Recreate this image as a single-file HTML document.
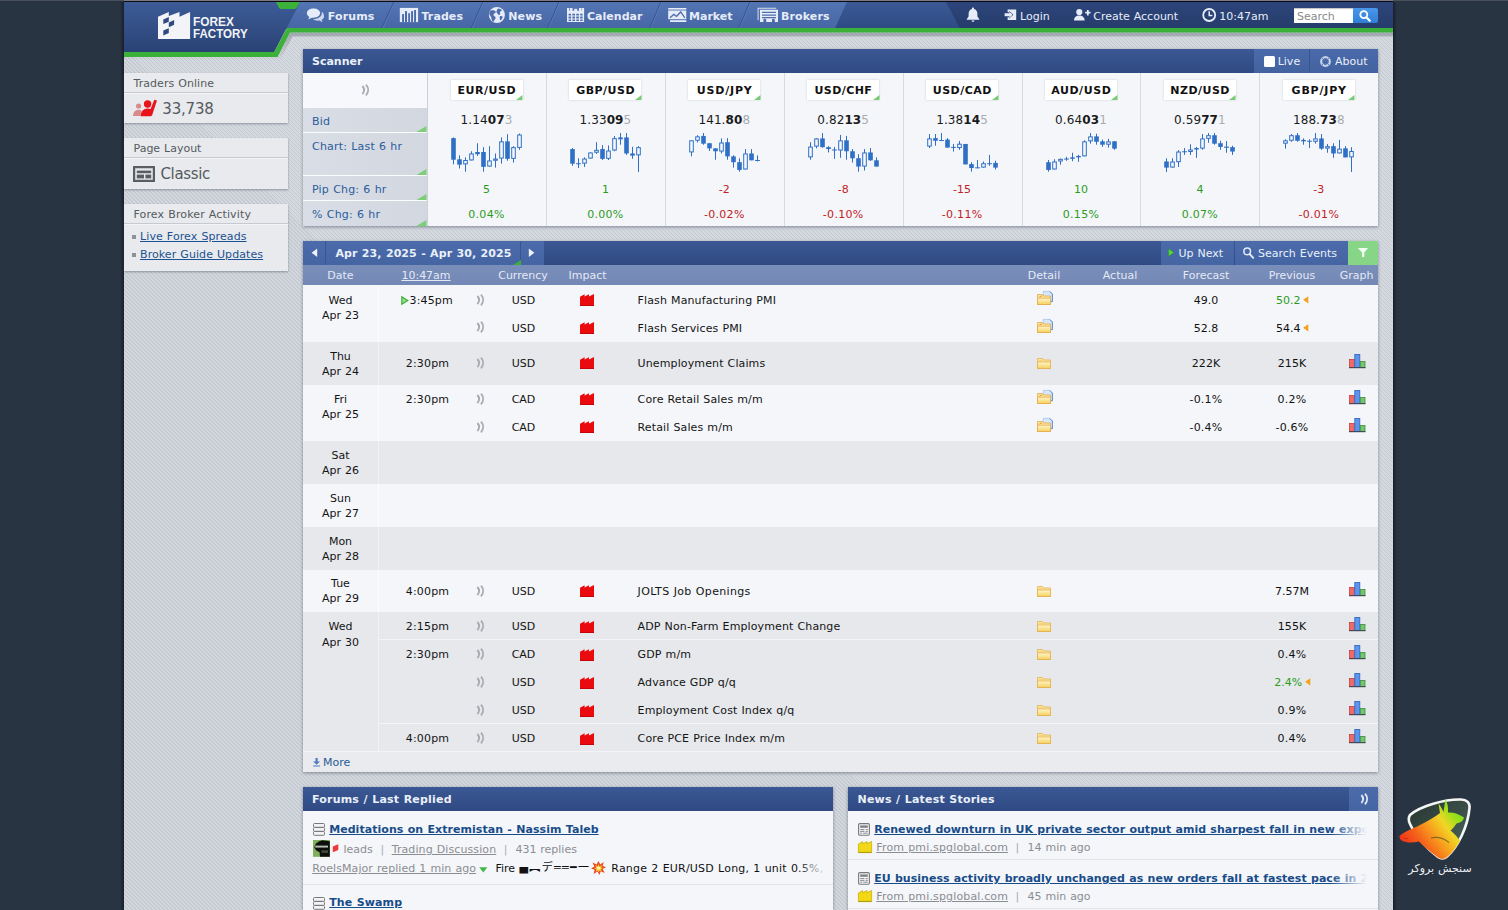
<!DOCTYPE html>
<html lang="en"><head><meta charset="utf-8"><title>Forex Factory</title>
<style>
html,body{margin:0;padding:0}
body{width:1508px;height:910px;overflow:hidden;position:relative;background:#293443;font-family:"DejaVu Sans","Liberation Sans",sans-serif;font-size:11px;}
.t{position:absolute;white-space:nowrap;font-family:"DejaVu Sans","Liberation Sans",sans-serif;word-spacing:0.4px}
.b{position:absolute}
svg{position:absolute;overflow:visible}
a{color:inherit}
.u{text-decoration:underline}
</style></head><body>
<div class="b" style="left:0px;top:0px;width:1508px;height:1px;background:#4a4f5c;"></div><div class="b" style="left:124px;top:0px;width:1269px;height:0.7px;background:#7d7886;"></div><div class="b" style="left:124px;top:0.7px;width:1269px;height:1.3px;background:#0b0b14;"></div><div class="b" style="left:120px;top:2px;width:4px;height:908px;background:linear-gradient(90deg,rgba(0,0,0,0),rgba(10,14,22,.55));"></div><div class="b" style="left:1393px;top:2px;width:4px;height:908px;background:linear-gradient(90deg,rgba(10,14,22,.55),rgba(0,0,0,0));"></div><div class="b" style="left:124px;top:2px;width:1269px;height:908px;background:repeating-linear-gradient(45deg,#c5cad2 0,#c5cad2 0.8px,#d4d8df 0.8px,#d4d8df 2.828px);"></div><svg style="left:124px;top:2px" width="1269" height="64" viewBox="124 2 1269 64">
<defs>
<linearGradient id="gLogo" x1="0" y1="0" x2="0" y2="1"><stop offset="0" stop-color="#3c5b97"/><stop offset="1" stop-color="#2a4375"/></linearGradient>
<linearGradient id="gNavL" x1="0" y1="0" x2="0" y2="1"><stop offset="0" stop-color="#5475b3"/><stop offset="1" stop-color="#4666a6"/></linearGradient>
<linearGradient id="gNavM" x1="0" y1="0" x2="0" y2="1"><stop offset="0" stop-color="#3a5995"/><stop offset="1" stop-color="#2f4b84"/></linearGradient>
<linearGradient id="gNavD" x1="0" y1="0" x2="0" y2="1"><stop offset="0" stop-color="#2d457b"/><stop offset="1" stop-color="#263c6b"/></linearGradient>
<linearGradient id="gSh" x1="0" y1="0" x2="0" y2="1"><stop offset="0" stop-color="rgba(40,50,60,.28)"/><stop offset="1" stop-color="rgba(40,50,60,0)"/></linearGradient>
</defs>
<!-- shadow under header -->
<polygon points="124,57 277.5,57 290,32.5 1393,32.5 1393,36.5 292.5,36.5 280,61 124,61" fill="url(#gSh)"/>
<!-- nav dark base -->
<rect x="280" y="2" width="1113" height="26.5" fill="url(#gNavD)"/>
<polygon points="835,28.5 847,2 946,2 960,28.5" fill="url(#gNavM)"/>
<polygon points="286,28.5 300,2 847,2 835,28.5" fill="url(#gNavL)"/>
<!-- nav separators -->
<g stroke="#34528f" stroke-width="1" fill="none">
<line x1="393.8" y1="2" x2="381.8" y2="28"/><line x1="482.8" y1="2" x2="471.3" y2="28"/><line x1="558.8" y1="2" x2="547.8" y2="28"/><line x1="660.8" y1="2" x2="649.8" y2="28"/><line x1="749.8" y1="2" x2="738.8" y2="28"/>
</g>
<g stroke="#5f7fbb" stroke-width="1" fill="none" opacity=".7">
<line x1="394.8" y1="2" x2="382.8" y2="28"/><line x1="483.8" y1="2" x2="472.3" y2="28"/><line x1="559.8" y1="2" x2="548.8" y2="28"/><line x1="661.8" y1="2" x2="650.8" y2="28"/><line x1="750.8" y1="2" x2="739.8" y2="28"/>
</g>
<!-- logo dark block -->
<polygon points="124,2 300,2 274.3,52 124,52" fill="url(#gLogo)"/>
<!-- green tab -->
<polygon points="276,2 300,2 296.5,8 295,9 280.5,9 279,8" fill="#3bb13a"/>
<!-- green stripe -->
<polygon points="124,52 274.3,52 287,28 1393,28 1393,32.5 290,32.5 277.5,57 124,57" fill="#3bb13a"/>
<!-- logo mark -->
<path fill="#f2f4f8" d="M158,38.9 L158,16.700 L168.800,11.900 L168.800,16 L179.500,11.900 L179.500,16.700 L190.100,11.900 L190.100,38.900 Z"/>
<g fill="#2e4980">
<polygon points="163.300,19.600 168.800,17 168.800,21.800 163.300,24.100"/>
<polygon points="168.800,22.500 174.100,20 174.100,24.800 168.800,27.200"/>
<polygon points="163.300,30.500 168.800,28.300 168.800,33.100 163.300,35.600"/>
</g>
<text x="193" y="26.200" font-family="'Liberation Sans',sans-serif" font-weight="bold" font-size="12.300" fill="#f2f4f8" textLength="40.900" lengthAdjust="spacingAndGlyphs">FOREX</text>
<text x="193" y="38.200" font-family="'Liberation Sans',sans-serif" font-weight="bold" font-size="12.300" fill="#f2f4f8" textLength="54.700" lengthAdjust="spacingAndGlyphs">FACTORY</text>
</svg><div class="t" style="top:9.5px;font-size:11px;line-height:13px;color:#e6ecf8;font-weight:bold;letter-spacing:0.12px;left:327.8px;">Forums</div><div class="t" style="top:9.5px;font-size:11px;line-height:13px;color:#e6ecf8;font-weight:bold;letter-spacing:0.08px;left:421.5px;">Trades</div><div class="t" style="top:9.5px;font-size:11px;line-height:13px;color:#e6ecf8;font-weight:bold;letter-spacing:0.16px;left:508.2px;">News</div><div class="t" style="top:9.5px;font-size:11px;line-height:13px;color:#e6ecf8;font-weight:bold;letter-spacing:0.03px;left:587px;">Calendar</div><div class="t" style="top:9.5px;font-size:11px;line-height:13px;color:#e6ecf8;font-weight:bold;letter-spacing:0.01px;left:689px;">Market</div><div class="t" style="top:9.5px;font-size:11px;line-height:13px;color:#e6ecf8;font-weight:bold;letter-spacing:0.11px;left:781px;">Brokers</div><div class="t" style="top:9.5px;font-size:11px;line-height:13px;color:#e6ecf8;left:1020px;">Login</div><div class="t" style="top:9.5px;font-size:11px;line-height:13px;color:#e6ecf8;left:1093.3px;">Create Account</div><div class="t" style="top:9.5px;font-size:11px;line-height:13px;color:#e6ecf8;left:1219.3px;">10:47am</div><svg style="left:0;top:0" width="1508" height="34" viewBox="0 0 1508 34">
<g fill="#e6ecf8">
<!-- forums bubbles -->
<path d="M313.5,8.5c-3.7,0-6.6,2.1-6.6,4.7c0,1.5,1,2.9,2.5,3.7l-1.2,2.6l3.6-1.8c.5,.1,1.1,.1,1.7,.1c3.7,0,6.6-2.1,6.6-4.7S317.200,8.500,313.500,8.500z"/>
<path d="M321.5,11.800c.2,.5,.3,1,.3,1.500c0,3.200-3.500,5.800-7.900,5.800c-.3,0-.5,0-.8,0c1.100,1,2.900,1.600,4.800,1.600c.5,0,1-.1,1.500-.1l3.200,1.600l-1-2.400c1.500-.8,2.400-2,2.400-3.400C324,13.800,323,12.500,321.500,11.800z" opacity=".85"/>
<!-- trades -->
<rect x="399.800" y="7.900" width="18.300" height="14.200"/>
<g fill="#4b6bab"><rect x="402.100" y="14.100" width="1.900" height="8"/><rect x="405" y="11.100" width="2" height="11"/><rect x="408.200" y="13.200" width="1.800" height="8.900"/><rect x="411.100" y="11.100" width="1.900" height="11"/><rect x="414.100" y="10" width="1.900" height="12.100"/></g>
</g>
<!-- news globe -->
<circle cx="496.900" cy="15" r="8" fill="#e6ecf8"/>
<g fill="#4d6dac">
<path d="M491,10.500c1.500-.5,3.500-.3,4.500,.8c.8,1-.5,2-1.500,2.500c-1,.5-.5,2,.5,2.500c1.200,.6,1.500,2,.5,3c-.8,.8-1,2-1.500,2.500c-1.500-.5-2-2.500-2.200-4c-.1-1.500-1.800-2.200-2-3.800C489.200,12.500,490,11,491,10.500z"/>
<path d="M498,8.500c1.500,.2,3,.8,4,1.800c-.5,.8-1.500,.8-2,1.600c-.4,.8,.5,1.800,.1,2.600c-.5,.8-1.800,.5-2.200-.4c-.4-1-1.500-1-1.500-2C496.400,11,497.200,9.500,498,8.500z"/>
<path d="M500,16c1-.3,2.200,0,2.800,.8c-.3,1.500-1.200,2.800-2.400,3.700C499.800,19.200,499.300,17.200,500,16z"/>
</g>
<g fill="#e6ecf8">
<!-- calendar -->
<rect x="567" y="8" width="2.200" height="3.500"/><rect x="569.900" y="8" width="2.600" height="3.500"/><rect x="579" y="8" width="2.600" height="3.500"/><rect x="582" y="8" width="2.100" height="3.500"/><rect x="574.200" y="8.800" width="3" height="2.600"/>
<path d="M567,10.800h17.100v11.200h-17.100z M568.600,13.700v1.900h2.500v-1.900z M572.400,13.700v1.900h2.600v-1.900z M576.300,13.700v1.900h2.600v-1.900z M580.200,13.700v1.900h2.400v-1.900z M568.600,16.600v1.900h2.500v-1.900z M572.400,16.600v1.900h2.600v-1.900z M576.300,16.600v1.900h2.600v-1.900z M580.200,16.600v1.900h2.400v-1.900z M568.600,19.400v1.500h2.500v-1.500z M572.400,19.400v1.500h2.600v-1.500z M576.300,19.400v1.500h2.600v-1.500z M580.200,19.400v1.500h2.400v-1.500z" fill-rule="evenodd"/>
<!-- market -->
<rect x="668.200" y="8" width="18.100" height="1.600"/>
<rect x="670" y="20.200" width="16.300" height="1.800"/>
<path d="M668.200,10.400v8.800h18.100v-8.800z M669.600,17.200l4.200-3.600l2.600,1.800l4.400-4.600l4.600,6.600l-1,.8l-3.700-5.300l-4.100,4.300l-2.700-1.900l-3.500,3z" fill-rule="evenodd"/>
<!-- brokers -->
<path d="M757.600,7.800h18.600v1h-17.600v11.400h-1z" opacity=".9"/>
<path d="M760,9.800h18v12.200h-3.200v-2.300c0-1.200-2.800-1.200-2.800,0v2.300h-5.800v-2.300c0-1.200-2.800-1.200-2.800,0v2.300h-3.400z M762,11.800v1.300h14v-1.300z M762,14.400v1.300h14v-1.300z M762,17v1.300h14v-1.300z" fill-rule="evenodd"/>
<!-- bell -->
<path d="M973,7.600c-.6,0-1,.4-1,1v.5c-2.100,.5-3.400,2.300-3.400,4.700v2.800l-1.800,2.400v.8h12.400v-.8l-1.800-2.400v-2.800c0-2.400-1.300-4.200-3.400-4.700v-.5C974,8,973.600,7.600,973,7.600z M971.500,20.400c0,.8,.7,1.400,1.500,1.400s1.500-.6,1.500-1.400z"/>
<!-- login -->
<path d="M1007.600,9.500h8.600v10.600h-8.600v-2.800h1.600v1.200l4.200-3.700l-4.200-3.700v1.200h-1.600z"/>
<path d="M1004.600,13.300h4.800v-1.600l3.200,3.100l-3.200,3.100v-1.600h-4.800z"/>
<!-- create account -->
<circle cx="1079.300" cy="12" r="3.100"/>
<path d="M1074,20.500c0-3.200,2.300-5,5.300-5s5.300,1.800,5.300,5z"/>
<path d="M1085.200,11.800h1.800v-1.900h1.700v1.900h1.800v1.700h-1.800v1.900h-1.700v-1.900h-1.800z"/>
</g>
<!-- clock -->
<circle cx="1209.200" cy="15" r="6" fill="none" stroke="#e6ecf8" stroke-width="1.800"/>
<path d="M1209.200,11.200v4.200h3.200" fill="none" stroke="#e6ecf8" stroke-width="1.500"/>
</svg><div class="b" style="left:1294px;top:8px;width:59px;height:15px;background:#fff;box-shadow:inset 0 1px 1px rgba(0,0,0,.25)"></div><div class="t" style="top:9.5px;font-size:11px;line-height:13px;color:#8a8a8a;left:1297px;">Search</div><div class="b" style="left:1353px;top:8px;width:25px;height:15px;background:linear-gradient(#4a97ea,#2f7fd6);border-radius:0 2px 2px 0"></div><svg style="left:1358px;top:9px" width="14" height="14" viewBox="0 0 14 14"><circle cx="5.800" cy="5.600" r="3.500" fill="none" stroke="#fff" stroke-width="1.800"/><path d="M8.300,8.200l3.400,3.400" stroke="#fff" stroke-width="2.200" stroke-linecap="round"/></svg><div class="b" style="left:124px;top:73px;width:164px;height:50px;background:#e8eaed;box-shadow:0 1px 2px rgba(60,70,85,.45)"></div><div class="b" style="left:124px;top:92px;width:164px;height:1px;background:#c6cad0;"></div><div class="b" style="left:124px;top:93px;width:164px;height:1px;background:#f4f5f7;"></div><div class="t" style="top:77px;font-size:11px;line-height:13px;color:#555a60;letter-spacing:0.06px;left:133.5px;">Traders Online</div><div class="t" style="top:100px;font-size:15px;line-height:18px;color:#555a60;letter-spacing:-0.2px;left:162.3px;">33,738</div><svg style="left:132px;top:98px" width="28" height="20" viewBox="132 98 28 20">
<g fill="#d98a8a"><circle cx="138.600" cy="106" r="2.600"/><path d="M133,116c.3-4,2.300-6.200,5.600-6.200c1.300,0,2.400,.4,3.200,1.100l-1.800,5.100z"/></g>
<g fill="#e8141a"><circle cx="147.600" cy="104" r="3.700"/><path d="M140.500,116.200c.5-5,3-7.800,7-7.800c1.200,0,2.200,.2,3.100,.7l3.700-9.300l2.700,.6l-4.500,13.600c-.3,1.400-.9,2.200-2.300,2.200z"/></g>
</svg><div class="b" style="left:124px;top:138px;width:164px;height:51px;background:#e8eaed;box-shadow:0 1px 2px rgba(60,70,85,.45)"></div><div class="b" style="left:124px;top:157px;width:164px;height:1px;background:#c6cad0;"></div><div class="b" style="left:124px;top:158px;width:164px;height:1px;background:#f4f5f7;"></div><div class="t" style="top:142px;font-size:11px;line-height:13px;color:#555a60;left:133.5px;">Page Layout</div><div class="t" style="top:164.5px;font-size:15px;line-height:18px;color:#555a60;letter-spacing:-0.35px;left:160.5px;">Classic</div><svg style="left:133px;top:166px" width="22" height="16" viewBox="0 0 22 16">
<path fill="#5a5e64" fill-rule="evenodd" d="M0,0h22v16h-22z M2.200,2.200v11.600h17.600v-11.600z"/>
<rect x="3.800" y="4.600" width="14.400" height="2.600" fill="#5a5e64"/>
<rect x="3.800" y="8.600" width="7.200" height="3.800" fill="#5a5e64"/>
<rect x="12.400" y="8.600" width="5.800" height="3.800" fill="#5a5e64"/>
</svg><div class="b" style="left:124px;top:204px;width:164px;height:67px;background:#e8eaed;box-shadow:0 1px 2px rgba(60,70,85,.45)"></div><div class="b" style="left:124px;top:223px;width:164px;height:1px;background:#c6cad0;"></div><div class="b" style="left:124px;top:224px;width:164px;height:1px;background:#f4f5f7;"></div><div class="t" style="top:208px;font-size:11px;line-height:13px;color:#555a60;letter-spacing:0.13px;left:133.5px;">Forex Broker Activity</div><div class="t" style="top:230px;font-size:11px;line-height:13px;color:#1c5290;letter-spacing:0.1px;left:140px;text-decoration:underline;">Live Forex Spreads</div><div class="t" style="top:248px;font-size:11px;line-height:13px;color:#1c5290;letter-spacing:0.08px;left:140px;text-decoration:underline;">Broker Guide Updates</div><div class="b" style="left:131.5px;top:235px;width:4px;height:4px;background:#8d9299;"></div><div class="b" style="left:131.5px;top:253px;width:4px;height:4px;background:#8d9299;"></div><div class="b" style="left:303px;top:49px;width:1075px;height:177px;background:#f4f6fa;box-shadow:0 1px 3px rgba(50,60,80,.5)"></div><div class="b" style="left:303px;top:49px;width:1075px;height:23.5px;background:linear-gradient(#3b5894,#2f4a83);"></div><div class="t" style="top:55px;font-size:11px;line-height:13px;color:#eaf0fa;font-weight:bold;left:312px;">Scanner</div><div class="b" style="left:1254px;top:49px;width:124px;height:23.5px;background:linear-gradient(#4a6aaa,#4262a0);"></div><div class="b" style="left:1309px;top:49px;width:1px;height:23.5px;background:#37558f;"></div><div class="b" style="left:1264px;top:56px;width:11px;height:11px;background:#fff;border-radius:1.5px;"></div><div class="t" style="top:55px;font-size:11px;line-height:13px;color:#eaf0fa;left:1277.7px;">Live</div><svg style="left:1319px;top:55px" width="13" height="13" viewBox="0 0 13 13"><circle cx="6.500" cy="6.500" r="4.300" fill="none" stroke="#c5d2ea" stroke-width="2.300"/><circle cx="6.500" cy="6.500" r="2.600" fill="none" stroke="#5b78b3" stroke-width=".8"/><g stroke="#5b78b3" stroke-width=".9"><path d="M3,3l1.800,1.800M10,3l-1.800,1.800M3,10l1.800-1.800M10,10l-1.800-1.800"/></g></svg><div class="t" style="top:55px;font-size:11px;line-height:13px;color:#eaf0fa;left:1335px;">About</div><div class="b" style="left:303px;top:72.5px;width:124px;height:35.5px;background:#f7f8fb;"></div><div class="b" style="left:303px;top:108px;width:124px;height:24px;background:linear-gradient(90deg,#d9dde6,#d2d7e0);"></div><svg style="left:415.700px;top:125.8px" width="10.400" height="6.200" viewBox="0 0 10.400 6.200"><polygon points="10.400,0 10.400,6.200 0,6.200" fill="#7bcf77"/></svg><div class="b" style="left:303px;top:133.3px;width:124px;height:41.5px;background:linear-gradient(90deg,#d9dde6,#d2d7e0);"></div><svg style="left:415.700px;top:168.60000000000002px" width="10.400" height="6.200" viewBox="0 0 10.400 6.200"><polygon points="10.400,0 10.400,6.200 0,6.200" fill="#7bcf77"/></svg><div class="b" style="left:303px;top:176px;width:124px;height:23.900000000000006px;background:linear-gradient(90deg,#d9dde6,#d2d7e0);"></div><svg style="left:415.700px;top:193.70000000000002px" width="10.400" height="6.200" viewBox="0 0 10.400 6.200"><polygon points="10.400,0 10.400,6.200 0,6.200" fill="#7bcf77"/></svg><div class="b" style="left:303px;top:201px;width:124px;height:25px;background:linear-gradient(90deg,#d9dde6,#d2d7e0);"></div><svg style="left:415.700px;top:219.8px" width="10.400" height="6.200" viewBox="0 0 10.400 6.200"><polygon points="10.400,0 10.400,6.200 0,6.200" fill="#7bcf77"/></svg><div class="b" style="left:303px;top:132px;width:123.2px;height:1.2px;background:#fbfcfd;"></div><div class="b" style="left:303px;top:174.8px;width:123.2px;height:1.2px;background:#fbfcfd;"></div><div class="b" style="left:303px;top:199.9px;width:123.2px;height:1.2px;background:#fbfcfd;"></div><div class="b" style="left:427px;top:72.5px;width:1px;height:153.5px;background:#ccd0d8;"></div><div class="t" style="top:115px;font-size:11px;line-height:13px;color:#2b5d9c;letter-spacing:0.15px;left:312px;">Bid</div><div class="t" style="top:140px;font-size:11px;line-height:13px;color:#2b5d9c;letter-spacing:0.2px;left:312px;">Chart: Last 6 hr</div><div class="t" style="top:182.5px;font-size:11px;line-height:13px;color:#2b5d9c;letter-spacing:0.2px;left:312px;">Pip Chg: 6 hr</div><div class="t" style="top:208px;font-size:11px;line-height:13px;color:#2b5d9c;letter-spacing:0.2px;left:312px;">% Chg: 6 hr</div><svg style="left:360px;top:83px" width="10" height="14" viewBox="-5 -7 10 14"><g fill="none" stroke="#a9acb3" stroke-width="1.900" stroke-linecap="butt" transform="scale(1.0)"><path d="M-2.600,-4c2.100,2.400,2.100,5.600,0,8"/><path d="M1,-5.300c2.800,3.200,2.800,7.400,0,10.600"/></g></svg><div class="b" style="left:450.5px;top:80px;width:72px;height:20px;background:#fff;box-shadow:0 0 2px rgba(120,130,150,.35)"></div><svg style="left:516.0px;top:95px" width="6.500" height="5" viewBox="0 0 6.500 5"><polygon points="6.500,0 6.500,5 0,5" fill="#79cb74"/></svg><div class="t" style="top:84px;font-size:11px;line-height:13px;color:#111;font-weight:bold;letter-spacing:0.54px;left:436.77px;width:100px;text-align:center;">EUR/USD</div><div class="t" style="top:113px;font-size:12px;line-height:14px;color:#1a1a1a;letter-spacing:0.1px;left:431.5px;width:110px;text-align:center;">1.14<b>07</b><span style="color:#a9acb0">3</span></div><div class="t" style="top:182.6px;font-size:11px;line-height:13px;color:#2c9c1c;left:436.5px;width:100px;text-align:center;">5</div><div class="t" style="top:208px;font-size:11px;line-height:13px;color:#2c9c1c;letter-spacing:0.3px;left:436.5px;width:100px;text-align:center;">0.04%</div><svg style="left:427.0px;top:125px" width="119" height="55" viewBox="0 0 119 55"><line x1="26.50" y1="12.40" x2="26.50" y2="39.39" stroke="#2f6fc6" stroke-width="1"/><rect x="24.20" y="13.13" width="4.600" height="21.59" fill="#2f6fc6"/><line x1="32.50" y1="30.34" x2="32.50" y2="43.47" stroke="#2f6fc6" stroke-width="1"/><rect x="30.20" y="34.28" width="4.600" height="5.40" fill="#2f6fc6"/><line x1="38.50" y1="32.39" x2="38.50" y2="46.68" stroke="#2f6fc6" stroke-width="1"/><rect x="36.70" y="35.51" width="3.600" height="3.38" fill="#f6f8fb" stroke="#2f6fc6" stroke-width="1"/><line x1="44.50" y1="26.26" x2="44.50" y2="35.45" stroke="#2f6fc6" stroke-width="1"/><rect x="42.70" y="28.95" width="3.600" height="6.00" fill="#f6f8fb" stroke="#2f6fc6" stroke-width="1"/><line x1="50.50" y1="18.23" x2="50.50" y2="30.93" stroke="#2f6fc6" stroke-width="1"/><rect x="48.20" y="26.99" width="4.600" height="2.19" fill="#2f6fc6"/><line x1="56.50" y1="22.17" x2="56.50" y2="46.68" stroke="#2f6fc6" stroke-width="1"/><rect x="54.20" y="26.99" width="4.600" height="14.88" fill="#2f6fc6"/><line x1="62.50" y1="21.15" x2="62.50" y2="41.58" stroke="#2f6fc6" stroke-width="1"/><rect x="60.70" y="35.95" width="3.600" height="5.13" fill="#f6f8fb" stroke="#2f6fc6" stroke-width="1"/><line x1="68.50" y1="28.45" x2="68.50" y2="42.60" stroke="#2f6fc6" stroke-width="1"/><rect x="66.70" y="34.05" width="3.600" height="1.19" fill="#f6f8fb" stroke="#2f6fc6" stroke-width="1"/><line x1="74.50" y1="12.40" x2="74.50" y2="38.66" stroke="#2f6fc6" stroke-width="1"/><rect x="72.70" y="16.84" width="3.600" height="16.21" fill="#f6f8fb" stroke="#2f6fc6" stroke-width="1"/><line x1="80.50" y1="9.19" x2="80.50" y2="35.74" stroke="#2f6fc6" stroke-width="1"/><rect x="78.20" y="16.34" width="4.600" height="17.51" fill="#2f6fc6"/><line x1="86.50" y1="21.15" x2="86.50" y2="37.64" stroke="#2f6fc6" stroke-width="1"/><rect x="84.70" y="22.67" width="3.600" height="10.67" fill="#f6f8fb" stroke="#2f6fc6" stroke-width="1"/><line x1="92.50" y1="8.46" x2="92.50" y2="24.80" stroke="#2f6fc6" stroke-width="1"/><rect x="90.70" y="9.98" width="3.600" height="12.42" fill="#f6f8fb" stroke="#2f6fc6" stroke-width="1"/></svg><div class="b" style="left:545.5px;top:72.5px;width:1px;height:153.5px;background:#d6dae1;"></div><div class="b" style="left:569.4px;top:80px;width:72px;height:20px;background:#fff;box-shadow:0 0 2px rgba(120,130,150,.35)"></div><svg style="left:634.9px;top:95px" width="6.500" height="5" viewBox="0 0 6.500 5"><polygon points="6.500,0 6.500,5 0,5" fill="#79cb74"/></svg><div class="t" style="top:84px;font-size:11px;line-height:13px;color:#111;font-weight:bold;letter-spacing:0.47px;left:555.635px;width:100px;text-align:center;">GBP/USD</div><div class="t" style="top:113px;font-size:12px;line-height:14px;color:#1a1a1a;letter-spacing:0.1px;left:550.4px;width:110px;text-align:center;">1.33<b>09</b><span style="color:#a9acb0">5</span></div><div class="t" style="top:182.6px;font-size:11px;line-height:13px;color:#2c9c1c;left:555.4px;width:100px;text-align:center;">1</div><div class="t" style="top:208px;font-size:11px;line-height:13px;color:#2c9c1c;letter-spacing:0.3px;left:555.4px;width:100px;text-align:center;">0.00%</div><svg style="left:545.9px;top:125px" width="119" height="55" viewBox="0 0 119 55"><line x1="26.50" y1="23.05" x2="26.50" y2="40.85" stroke="#2f6fc6" stroke-width="1"/><rect x="24.20" y="24.07" width="4.600" height="14.59" fill="#2f6fc6"/><line x1="32.50" y1="33.26" x2="32.50" y2="43.03" stroke="#2f6fc6" stroke-width="1"/><rect x="30.10" y="38.22" width="4.800" height="1.00" fill="#2f6fc6"/><line x1="38.50" y1="32.39" x2="38.50" y2="42.01" stroke="#2f6fc6" stroke-width="1"/><rect x="36.70" y="34.05" width="3.600" height="4.11" fill="#f6f8fb" stroke="#2f6fc6" stroke-width="1"/><line x1="44.50" y1="27.43" x2="44.50" y2="33.55" stroke="#2f6fc6" stroke-width="1"/><rect x="42.70" y="27.93" width="3.600" height="5.13" fill="#f6f8fb" stroke="#2f6fc6" stroke-width="1"/><line x1="50.50" y1="17.21" x2="50.50" y2="28.88" stroke="#2f6fc6" stroke-width="1"/><rect x="48.70" y="25.30" width="3.600" height="1.92" fill="#f6f8fb" stroke="#2f6fc6" stroke-width="1"/><line x1="56.50" y1="20.13" x2="56.50" y2="35.01" stroke="#2f6fc6" stroke-width="1"/><rect x="54.20" y="24.07" width="4.600" height="9.77" fill="#2f6fc6"/><line x1="62.50" y1="20.42" x2="62.50" y2="35.01" stroke="#2f6fc6" stroke-width="1"/><rect x="60.70" y="26.03" width="3.600" height="7.32" fill="#f6f8fb" stroke="#2f6fc6" stroke-width="1"/><line x1="68.50" y1="10.94" x2="68.50" y2="26.26" stroke="#2f6fc6" stroke-width="1"/><rect x="66.70" y="13.63" width="3.600" height="11.40" fill="#f6f8fb" stroke="#2f6fc6" stroke-width="1"/><line x1="74.50" y1="8.02" x2="74.50" y2="19.69" stroke="#2f6fc6" stroke-width="1"/><rect x="72.20" y="12.40" width="4.600" height="1.90" fill="#2f6fc6"/><line x1="80.50" y1="8.02" x2="80.50" y2="29.91" stroke="#2f6fc6" stroke-width="1"/><rect x="78.20" y="12.40" width="4.600" height="16.05" fill="#2f6fc6"/><line x1="86.50" y1="21.88" x2="86.50" y2="33.84" stroke="#2f6fc6" stroke-width="1"/><rect x="84.20" y="28.45" width="4.600" height="2.19" fill="#2f6fc6"/><line x1="92.50" y1="21.15" x2="92.50" y2="46.97" stroke="#2f6fc6" stroke-width="1"/><rect x="90.70" y="22.67" width="3.600" height="7.17" fill="#f6f8fb" stroke="#2f6fc6" stroke-width="1"/></svg><div class="b" style="left:664.5px;top:72.5px;width:1px;height:153.5px;background:#d6dae1;"></div><div class="b" style="left:688.3px;top:80px;width:72px;height:20px;background:#fff;box-shadow:0 0 2px rgba(120,130,150,.35)"></div><svg style="left:753.8px;top:95px" width="6.500" height="5" viewBox="0 0 6.500 5"><polygon points="6.500,0 6.500,5 0,5" fill="#79cb74"/></svg><div class="t" style="top:84px;font-size:11px;line-height:13px;color:#111;font-weight:bold;letter-spacing:0.8px;left:674.6999999999999px;width:100px;text-align:center;">USD/JPY</div><div class="t" style="top:113px;font-size:12px;line-height:14px;color:#1a1a1a;letter-spacing:0.1px;left:669.3px;width:110px;text-align:center;">141.<b>80</b><span style="color:#a9acb0">8</span></div><div class="t" style="top:182.6px;font-size:11px;line-height:13px;color:#c2211f;left:674.3px;width:100px;text-align:center;">-2</div><div class="t" style="top:208px;font-size:11px;line-height:13px;color:#c2211f;letter-spacing:0.3px;left:674.3px;width:100px;text-align:center;">-0.02%</div><svg style="left:664.8px;top:125px" width="119" height="55" viewBox="0 0 119 55"><line x1="26.50" y1="15.32" x2="26.50" y2="31.36" stroke="#2f6fc6" stroke-width="1"/><rect x="24.70" y="15.82" width="3.600" height="11.11" fill="#f6f8fb" stroke="#2f6fc6" stroke-width="1"/><line x1="32.50" y1="10.21" x2="32.50" y2="17.51" stroke="#2f6fc6" stroke-width="1"/><rect x="30.70" y="11.88" width="3.600" height="3.38" fill="#f6f8fb" stroke="#2f6fc6" stroke-width="1"/><line x1="38.50" y1="8.02" x2="38.50" y2="19.69" stroke="#2f6fc6" stroke-width="1"/><rect x="36.20" y="10.94" width="4.600" height="7.73" fill="#2f6fc6"/><line x1="44.50" y1="18.23" x2="44.50" y2="25.97" stroke="#2f6fc6" stroke-width="1"/><rect x="42.20" y="18.23" width="4.600" height="5.11" fill="#2f6fc6"/><line x1="50.50" y1="23.34" x2="50.50" y2="34.72" stroke="#2f6fc6" stroke-width="1"/><rect x="48.20" y="23.34" width="4.600" height="2.92" fill="#2f6fc6"/><line x1="56.50" y1="13.42" x2="56.50" y2="28.45" stroke="#2f6fc6" stroke-width="1"/><rect x="54.70" y="18.01" width="3.600" height="8.04" fill="#f6f8fb" stroke="#2f6fc6" stroke-width="1"/><line x1="62.50" y1="13.13" x2="62.50" y2="34.72" stroke="#2f6fc6" stroke-width="1"/><rect x="60.20" y="17.21" width="4.600" height="14.15" fill="#2f6fc6"/><line x1="68.50" y1="30.34" x2="68.50" y2="42.60" stroke="#2f6fc6" stroke-width="1"/><rect x="66.20" y="31.36" width="4.600" height="5.84" fill="#2f6fc6"/><line x1="74.50" y1="33.26" x2="74.50" y2="46.68" stroke="#2f6fc6" stroke-width="1"/><rect x="72.20" y="37.20" width="4.600" height="7.73" fill="#2f6fc6"/><line x1="80.50" y1="24.07" x2="80.50" y2="44.49" stroke="#2f6fc6" stroke-width="1"/><rect x="78.70" y="28.95" width="3.600" height="15.05" fill="#f6f8fb" stroke="#2f6fc6" stroke-width="1"/><line x1="86.50" y1="24.07" x2="86.50" y2="35.30" stroke="#2f6fc6" stroke-width="1"/><rect x="84.20" y="28.45" width="4.600" height="6.86" fill="#2f6fc6"/><line x1="92.50" y1="30.34" x2="92.50" y2="36.47" stroke="#2f6fc6" stroke-width="1"/><rect x="90.10" y="35.01" width="4.800" height="1.00" fill="#2f6fc6"/></svg><div class="b" style="left:783.5px;top:72.5px;width:1px;height:153.5px;background:#d6dae1;"></div><div class="b" style="left:807.2px;top:80px;width:72px;height:20px;background:#fff;box-shadow:0 0 2px rgba(120,130,150,.35)"></div><svg style="left:872.7px;top:95px" width="6.500" height="5" viewBox="0 0 6.500 5"><polygon points="6.500,0 6.500,5 0,5" fill="#79cb74"/></svg><div class="t" style="top:84px;font-size:11px;line-height:13px;color:#111;font-weight:bold;letter-spacing:0.43px;left:793.4150000000001px;width:100px;text-align:center;">USD/CHF</div><div class="t" style="top:113px;font-size:12px;line-height:14px;color:#1a1a1a;letter-spacing:0.1px;left:788.2px;width:110px;text-align:center;">0.82<b>13</b><span style="color:#a9acb0">5</span></div><div class="t" style="top:182.6px;font-size:11px;line-height:13px;color:#c2211f;left:793.2px;width:100px;text-align:center;">-8</div><div class="t" style="top:208px;font-size:11px;line-height:13px;color:#c2211f;letter-spacing:0.3px;left:793.2px;width:100px;text-align:center;">-0.10%</div><svg style="left:783.7px;top:125px" width="119" height="55" viewBox="0 0 119 55"><line x1="26.50" y1="17.21" x2="26.50" y2="34.72" stroke="#2f6fc6" stroke-width="1"/><rect x="24.70" y="22.09" width="3.600" height="9.80" fill="#f6f8fb" stroke="#2f6fc6" stroke-width="1"/><line x1="32.50" y1="13.13" x2="32.50" y2="23.34" stroke="#2f6fc6" stroke-width="1"/><rect x="30.70" y="13.92" width="3.600" height="7.17" fill="#f6f8fb" stroke="#2f6fc6" stroke-width="1"/><line x1="38.50" y1="8.02" x2="38.50" y2="22.61" stroke="#2f6fc6" stroke-width="1"/><rect x="36.20" y="13.42" width="4.600" height="8.75" fill="#2f6fc6"/><line x1="44.50" y1="21.15" x2="44.50" y2="27.43" stroke="#2f6fc6" stroke-width="1"/><rect x="42.20" y="22.17" width="4.600" height="1.90" fill="#2f6fc6"/><line x1="50.50" y1="21.88" x2="50.50" y2="33.84" stroke="#2f6fc6" stroke-width="1"/><rect x="48.10" y="24.51" width="4.800" height="1.02" fill="#2f6fc6"/><line x1="56.50" y1="9.92" x2="56.50" y2="32.82" stroke="#2f6fc6" stroke-width="1"/><rect x="54.70" y="15.82" width="3.600" height="9.21" fill="#f6f8fb" stroke="#2f6fc6" stroke-width="1"/><line x1="62.50" y1="10.94" x2="62.50" y2="34.72" stroke="#2f6fc6" stroke-width="1"/><rect x="60.20" y="15.32" width="4.600" height="10.94" fill="#2f6fc6"/><line x1="68.50" y1="24.07" x2="68.50" y2="37.64" stroke="#2f6fc6" stroke-width="1"/><rect x="66.20" y="26.26" width="4.600" height="7.00" fill="#2f6fc6"/><line x1="74.50" y1="29.18" x2="74.50" y2="46.68" stroke="#2f6fc6" stroke-width="1"/><rect x="72.20" y="33.26" width="4.600" height="8.32" fill="#2f6fc6"/><line x1="80.50" y1="24.07" x2="80.50" y2="45.51" stroke="#2f6fc6" stroke-width="1"/><rect x="78.70" y="27.93" width="3.600" height="13.15" fill="#f6f8fb" stroke="#2f6fc6" stroke-width="1"/><line x1="86.50" y1="23.05" x2="86.50" y2="35.74" stroke="#2f6fc6" stroke-width="1"/><rect x="84.20" y="27.43" width="4.600" height="7.88" fill="#2f6fc6"/><line x1="92.50" y1="32.39" x2="92.50" y2="41.58" stroke="#2f6fc6" stroke-width="1"/><rect x="90.20" y="35.30" width="4.600" height="6.27" fill="#2f6fc6"/></svg><div class="b" style="left:902.5px;top:72.5px;width:1px;height:153.5px;background:#d6dae1;"></div><div class="b" style="left:926.1px;top:80px;width:72px;height:20px;background:#fff;box-shadow:0 0 2px rgba(120,130,150,.35)"></div><svg style="left:991.6px;top:95px" width="6.500" height="5" viewBox="0 0 6.500 5"><polygon points="6.500,0 6.500,5 0,5" fill="#79cb74"/></svg><div class="t" style="top:84px;font-size:11px;line-height:13px;color:#111;font-weight:bold;letter-spacing:0.48px;left:912.34px;width:100px;text-align:center;">USD/CAD</div><div class="t" style="top:113px;font-size:12px;line-height:14px;color:#1a1a1a;letter-spacing:0.1px;left:907.1px;width:110px;text-align:center;">1.38<b>14</b><span style="color:#a9acb0">5</span></div><div class="t" style="top:182.6px;font-size:11px;line-height:13px;color:#c2211f;left:912.1px;width:100px;text-align:center;">-15</div><div class="t" style="top:208px;font-size:11px;line-height:13px;color:#c2211f;letter-spacing:0.3px;left:912.1px;width:100px;text-align:center;">-0.11%</div><svg style="left:902.6px;top:125px" width="119" height="55" viewBox="0 0 119 55"><line x1="26.50" y1="9.04" x2="26.50" y2="23.05" stroke="#2f6fc6" stroke-width="1"/><rect x="24.70" y="13.92" width="3.600" height="7.17" fill="#f6f8fb" stroke="#2f6fc6" stroke-width="1"/><line x1="32.50" y1="9.04" x2="32.50" y2="20.71" stroke="#2f6fc6" stroke-width="1"/><rect x="30.20" y="13.13" width="4.600" height="2.63" fill="#2f6fc6"/><line x1="38.50" y1="8.02" x2="38.50" y2="15.75" stroke="#2f6fc6" stroke-width="1"/><rect x="36.10" y="15.03" width="4.800" height="1.00" fill="#2f6fc6"/><line x1="44.50" y1="13.13" x2="44.50" y2="22.61" stroke="#2f6fc6" stroke-width="1"/><rect x="42.20" y="14.59" width="4.600" height="8.02" fill="#2f6fc6"/><line x1="50.50" y1="18.96" x2="50.50" y2="26.55" stroke="#2f6fc6" stroke-width="1"/><rect x="48.10" y="21.88" width="4.800" height="1.00" fill="#2f6fc6"/><line x1="56.50" y1="16.05" x2="56.50" y2="24.80" stroke="#2f6fc6" stroke-width="1"/><rect x="54.70" y="19.17" width="3.600" height="3.38" fill="#f6f8fb" stroke="#2f6fc6" stroke-width="1"/><line x1="62.50" y1="18.96" x2="62.50" y2="39.39" stroke="#2f6fc6" stroke-width="1"/><rect x="60.20" y="18.96" width="4.600" height="20.42" fill="#2f6fc6"/><line x1="68.50" y1="37.20" x2="68.50" y2="46.68" stroke="#2f6fc6" stroke-width="1"/><rect x="66.20" y="39.10" width="4.600" height="3.94" fill="#2f6fc6"/><line x1="74.50" y1="35.01" x2="74.50" y2="43.33" stroke="#2f6fc6" stroke-width="1"/><rect x="72.10" y="42.30" width="4.800" height="1.02" fill="#2f6fc6"/><line x1="80.50" y1="36.47" x2="80.50" y2="42.60" stroke="#2f6fc6" stroke-width="1"/><rect x="78.70" y="38.72" width="3.600" height="3.38" fill="#f6f8fb" stroke="#2f6fc6" stroke-width="1"/><line x1="86.50" y1="29.91" x2="86.50" y2="40.85" stroke="#2f6fc6" stroke-width="1"/><rect x="84.10" y="38.22" width="4.800" height="1.00" fill="#2f6fc6"/><line x1="92.50" y1="35.74" x2="92.50" y2="44.49" stroke="#2f6fc6" stroke-width="1"/><rect x="90.20" y="37.93" width="4.600" height="4.67" fill="#2f6fc6"/></svg><div class="b" style="left:1021.5px;top:72.5px;width:1px;height:153.5px;background:#d6dae1;"></div><div class="b" style="left:1045.0px;top:80px;width:72px;height:20px;background:#fff;box-shadow:0 0 2px rgba(120,130,150,.35)"></div><svg style="left:1110.5px;top:95px" width="6.500" height="5" viewBox="0 0 6.500 5"><polygon points="6.500,0 6.500,5 0,5" fill="#79cb74"/></svg><div class="t" style="top:84px;font-size:11px;line-height:13px;color:#111;font-weight:bold;letter-spacing:0.55px;left:1031.275px;width:100px;text-align:center;">AUD/USD</div><div class="t" style="top:113px;font-size:12px;line-height:14px;color:#1a1a1a;letter-spacing:0.1px;left:1026.0px;width:110px;text-align:center;">0.64<b>03</b><span style="color:#a9acb0">1</span></div><div class="t" style="top:182.6px;font-size:11px;line-height:13px;color:#2c9c1c;left:1031.0px;width:100px;text-align:center;">10</div><div class="t" style="top:208px;font-size:11px;line-height:13px;color:#2c9c1c;letter-spacing:0.3px;left:1031.0px;width:100px;text-align:center;">0.15%</div><svg style="left:1021.5px;top:125px" width="119" height="55" viewBox="0 0 119 55"><line x1="26.50" y1="35.01" x2="26.50" y2="46.68" stroke="#2f6fc6" stroke-width="1"/><rect x="24.20" y="37.20" width="4.600" height="7.73" fill="#2f6fc6"/><line x1="32.50" y1="34.28" x2="32.50" y2="44.49" stroke="#2f6fc6" stroke-width="1"/><rect x="30.70" y="36.97" width="3.600" height="7.02" fill="#f6f8fb" stroke="#2f6fc6" stroke-width="1"/><line x1="38.50" y1="33.55" x2="38.50" y2="39.68" stroke="#2f6fc6" stroke-width="1"/><rect x="36.70" y="34.34" width="3.600" height="1.63" fill="#f6f8fb" stroke="#2f6fc6" stroke-width="1"/><line x1="44.50" y1="31.80" x2="44.50" y2="35.74" stroke="#2f6fc6" stroke-width="1"/><rect x="42.10" y="33.55" width="4.800" height="1.00" fill="#2f6fc6"/><line x1="50.50" y1="27.72" x2="50.50" y2="36.18" stroke="#2f6fc6" stroke-width="1"/><rect x="48.20" y="32.39" width="4.600" height="1.46" fill="#2f6fc6"/><line x1="56.50" y1="29.91" x2="56.50" y2="36.76" stroke="#2f6fc6" stroke-width="1"/><rect x="54.20" y="30.93" width="4.600" height="1.46" fill="#2f6fc6"/><line x1="62.50" y1="15.32" x2="62.50" y2="31.36" stroke="#2f6fc6" stroke-width="1"/><rect x="60.70" y="16.84" width="3.600" height="14.03" fill="#f6f8fb" stroke="#2f6fc6" stroke-width="1"/><line x1="68.50" y1="8.02" x2="68.50" y2="18.67" stroke="#2f6fc6" stroke-width="1"/><rect x="66.70" y="11.88" width="3.600" height="3.96" fill="#f6f8fb" stroke="#2f6fc6" stroke-width="1"/><line x1="74.50" y1="8.75" x2="74.50" y2="19.69" stroke="#2f6fc6" stroke-width="1"/><rect x="72.20" y="11.38" width="4.600" height="5.40" fill="#2f6fc6"/><line x1="80.50" y1="14.59" x2="80.50" y2="21.88" stroke="#2f6fc6" stroke-width="1"/><rect x="78.20" y="16.34" width="4.600" height="3.36" fill="#2f6fc6"/><line x1="86.50" y1="13.86" x2="86.50" y2="22.61" stroke="#2f6fc6" stroke-width="1"/><rect x="84.70" y="16.84" width="3.600" height="2.36" fill="#f6f8fb" stroke="#2f6fc6" stroke-width="1"/><line x1="92.50" y1="16.05" x2="92.50" y2="24.80" stroke="#2f6fc6" stroke-width="1"/><rect x="90.20" y="16.34" width="4.600" height="7.29" fill="#2f6fc6"/></svg><div class="b" style="left:1139.5px;top:72.5px;width:1px;height:153.5px;background:#d6dae1;"></div><div class="b" style="left:1163.9px;top:80px;width:72px;height:20px;background:#fff;box-shadow:0 0 2px rgba(120,130,150,.35)"></div><svg style="left:1229.4px;top:95px" width="6.500" height="5" viewBox="0 0 6.500 5"><polygon points="6.500,0 6.500,5 0,5" fill="#79cb74"/></svg><div class="t" style="top:84px;font-size:11px;line-height:13px;color:#111;font-weight:bold;letter-spacing:0.46px;left:1150.13px;width:100px;text-align:center;">NZD/USD</div><div class="t" style="top:113px;font-size:12px;line-height:14px;color:#1a1a1a;letter-spacing:0.1px;left:1144.9px;width:110px;text-align:center;">0.59<b>77</b><span style="color:#a9acb0">1</span></div><div class="t" style="top:182.6px;font-size:11px;line-height:13px;color:#2c9c1c;left:1149.9px;width:100px;text-align:center;">4</div><div class="t" style="top:208px;font-size:11px;line-height:13px;color:#2c9c1c;letter-spacing:0.3px;left:1149.9px;width:100px;text-align:center;">0.07%</div><svg style="left:1140.4px;top:125px" width="119" height="55" viewBox="0 0 119 55"><line x1="26.50" y1="33.26" x2="26.50" y2="46.97" stroke="#2f6fc6" stroke-width="1"/><rect x="24.20" y="36.47" width="4.600" height="6.13" fill="#2f6fc6"/><line x1="32.50" y1="33.26" x2="32.50" y2="42.60" stroke="#2f6fc6" stroke-width="1"/><rect x="30.70" y="36.97" width="3.600" height="5.13" fill="#f6f8fb" stroke="#2f6fc6" stroke-width="1"/><line x1="38.50" y1="25.09" x2="38.50" y2="42.01" stroke="#2f6fc6" stroke-width="1"/><rect x="36.70" y="27.05" width="3.600" height="9.65" fill="#f6f8fb" stroke="#2f6fc6" stroke-width="1"/><line x1="44.50" y1="23.05" x2="44.50" y2="29.91" stroke="#2f6fc6" stroke-width="1"/><rect x="42.10" y="26.26" width="4.800" height="1.00" fill="#2f6fc6"/><line x1="50.50" y1="19.26" x2="50.50" y2="29.91" stroke="#2f6fc6" stroke-width="1"/><rect x="48.70" y="25.01" width="3.600" height="1.48" fill="#f6f8fb" stroke="#2f6fc6" stroke-width="1"/><line x1="56.50" y1="21.88" x2="56.50" y2="32.82" stroke="#2f6fc6" stroke-width="1"/><rect x="54.20" y="23.05" width="4.600" height="1.46" fill="#2f6fc6"/><line x1="62.50" y1="9.04" x2="62.50" y2="24.80" stroke="#2f6fc6" stroke-width="1"/><rect x="60.70" y="13.92" width="3.600" height="9.21" fill="#f6f8fb" stroke="#2f6fc6" stroke-width="1"/><line x1="68.50" y1="8.02" x2="68.50" y2="17.80" stroke="#2f6fc6" stroke-width="1"/><rect x="66.70" y="10.71" width="3.600" height="2.65" fill="#f6f8fb" stroke="#2f6fc6" stroke-width="1"/><line x1="74.50" y1="8.02" x2="74.50" y2="19.69" stroke="#2f6fc6" stroke-width="1"/><rect x="72.20" y="10.21" width="4.600" height="8.46" fill="#2f6fc6"/><line x1="80.50" y1="15.75" x2="80.50" y2="24.80" stroke="#2f6fc6" stroke-width="1"/><rect x="78.20" y="18.23" width="4.600" height="3.65" fill="#2f6fc6"/><line x1="86.50" y1="16.05" x2="86.50" y2="27.72" stroke="#2f6fc6" stroke-width="1"/><rect x="84.10" y="21.59" width="4.800" height="1.17" fill="#2f6fc6"/><line x1="92.50" y1="20.71" x2="92.50" y2="29.91" stroke="#2f6fc6" stroke-width="1"/><rect x="90.20" y="22.17" width="4.600" height="4.38" fill="#2f6fc6"/></svg><div class="b" style="left:1258.5px;top:72.5px;width:1px;height:153.5px;background:#d6dae1;"></div><div class="b" style="left:1282.8000000000002px;top:80px;width:72px;height:20px;background:#fff;box-shadow:0 0 2px rgba(120,130,150,.35)"></div><svg style="left:1348.3000000000002px;top:95px" width="6.500" height="5" viewBox="0 0 6.500 5"><polygon points="6.500,0 6.500,5 0,5" fill="#79cb74"/></svg><div class="t" style="top:84px;font-size:11px;line-height:13px;color:#111;font-weight:bold;letter-spacing:0.8px;left:1269.2000000000003px;width:100px;text-align:center;">GBP/JPY</div><div class="t" style="top:113px;font-size:12px;line-height:14px;color:#1a1a1a;letter-spacing:0.1px;left:1263.8000000000002px;width:110px;text-align:center;">188.<b>73</b><span style="color:#a9acb0">8</span></div><div class="t" style="top:182.6px;font-size:11px;line-height:13px;color:#c2211f;left:1268.8000000000002px;width:100px;text-align:center;">-3</div><div class="t" style="top:208px;font-size:11px;line-height:13px;color:#c2211f;letter-spacing:0.3px;left:1268.8000000000002px;width:100px;text-align:center;">-0.01%</div><svg style="left:1259.3000000000002px;top:125px" width="119" height="55" viewBox="0 0 119 55"><line x1="26.50" y1="14.30" x2="26.50" y2="23.63" stroke="#2f6fc6" stroke-width="1"/><rect x="24.70" y="15.82" width="3.600" height="2.36" fill="#f6f8fb" stroke="#2f6fc6" stroke-width="1"/><line x1="32.50" y1="9.04" x2="32.50" y2="16.78" stroke="#2f6fc6" stroke-width="1"/><rect x="30.70" y="10.71" width="3.600" height="4.54" fill="#f6f8fb" stroke="#2f6fc6" stroke-width="1"/><line x1="38.50" y1="8.02" x2="38.50" y2="16.78" stroke="#2f6fc6" stroke-width="1"/><rect x="36.20" y="10.21" width="4.600" height="5.54" fill="#2f6fc6"/><line x1="44.50" y1="13.42" x2="44.50" y2="19.69" stroke="#2f6fc6" stroke-width="1"/><rect x="42.20" y="14.88" width="4.600" height="1.46" fill="#2f6fc6"/><line x1="50.50" y1="14.30" x2="50.50" y2="23.05" stroke="#2f6fc6" stroke-width="1"/><rect x="48.10" y="15.75" width="4.800" height="1.00" fill="#2f6fc6"/><line x1="56.50" y1="8.02" x2="56.50" y2="18.67" stroke="#2f6fc6" stroke-width="1"/><rect x="54.70" y="13.92" width="3.600" height="2.36" fill="#f6f8fb" stroke="#2f6fc6" stroke-width="1"/><line x1="62.50" y1="9.04" x2="62.50" y2="24.80" stroke="#2f6fc6" stroke-width="1"/><rect x="60.20" y="13.42" width="4.600" height="10.21" fill="#2f6fc6"/><line x1="68.50" y1="18.96" x2="68.50" y2="27.72" stroke="#2f6fc6" stroke-width="1"/><rect x="66.70" y="21.65" width="3.600" height="1.48" fill="#f6f8fb" stroke="#2f6fc6" stroke-width="1"/><line x1="74.50" y1="18.23" x2="74.50" y2="32.82" stroke="#2f6fc6" stroke-width="1"/><rect x="72.20" y="21.15" width="4.600" height="7.29" fill="#2f6fc6"/><line x1="80.50" y1="14.88" x2="80.50" y2="28.45" stroke="#2f6fc6" stroke-width="1"/><rect x="78.70" y="24.13" width="3.600" height="3.81" fill="#f6f8fb" stroke="#2f6fc6" stroke-width="1"/><line x1="86.50" y1="21.15" x2="86.50" y2="32.39" stroke="#2f6fc6" stroke-width="1"/><rect x="84.20" y="23.34" width="4.600" height="9.04" fill="#2f6fc6"/><line x1="92.50" y1="22.17" x2="92.50" y2="46.97" stroke="#2f6fc6" stroke-width="1"/><rect x="90.70" y="26.47" width="3.600" height="5.42" fill="#f6f8fb" stroke="#2f6fc6" stroke-width="1"/></svg><div class="b" style="left:303px;top:241px;width:1075px;height:531px;background:#f4f6fa;box-shadow:0 1px 3px rgba(50,60,80,.5)"></div><div class="b" style="left:303px;top:241px;width:1075px;height:24px;background:linear-gradient(#3b5894,#2f4a83);"></div><div class="b" style="left:303px;top:241px;width:22.5px;height:24px;background:linear-gradient(#4b6bab,#4464a2);"></div><div class="b" style="left:326px;top:241px;width:194.5px;height:24px;background:linear-gradient(#4b6bab,#4464a2);"></div><div class="b" style="left:521px;top:241px;width:22.5px;height:24px;background:linear-gradient(#4b6bab,#4464a2);"></div><div class="b" style="left:325.2px;top:241px;width:1px;height:24px;background:#38568f;"></div><div class="b" style="left:520.3px;top:241px;width:1px;height:24px;background:#38568f;"></div><svg style="left:311px;top:248px" width="7" height="10" viewBox="0 0 7 10"><polygon points="6.200,0.600 6.200,9 0.600,4.800" fill="#eef2fa"/></svg><svg style="left:528px;top:248px" width="7" height="10" viewBox="0 0 7 10"><polygon points="0.800,0.600 0.800,9 6.400,4.800" fill="#eef2fa"/></svg><div class="t" style="top:247px;font-size:11px;line-height:13px;color:#eaf0fa;font-weight:bold;letter-spacing:0.08px;left:335.5px;">Apr 23, 2025 - Apr 30, 2025</div><svg style="left:511.500px;top:259.500px" width="9" height="5.500" viewBox="0 0 9 5.500"><polygon points="9,0 9,5.500 0,5.500" fill="#3bb13a"/></svg><div class="b" style="left:1161px;top:241px;width:72.5px;height:24px;background:linear-gradient(#4b6bab,#4464a2);"></div><div class="b" style="left:1234.5px;top:241px;width:113.5px;height:24px;background:linear-gradient(#4b6bab,#4464a2);"></div><div class="b" style="left:1348px;top:241px;width:30px;height:24px;background:#87d687;"></div><svg style="left:1168px;top:248px" width="8" height="10" viewBox="0 0 8 10"><polygon points="0.600,0.800 0.600,8.200 6,4.500" fill="#5fd052" stroke="#2f9a2a" stroke-width=".7"/></svg><div class="t" style="top:247px;font-size:11px;line-height:13px;color:#eaf0fa;left:1178.5px;">Up Next</div><svg style="left:1242px;top:246px" width="14" height="14" viewBox="0 0 14 14"><circle cx="5.200" cy="5.400" r="3.300" fill="none" stroke="#e4ebf8" stroke-width="1.500"/><path d="M7.600,8l3.600,3.800" stroke="#e4ebf8" stroke-width="1.900" stroke-linecap="round"/></svg><div class="t" style="top:247px;font-size:11px;line-height:13px;color:#eaf0fa;left:1258px;">Search Events</div><svg style="left:1357px;top:247px" width="12" height="11" viewBox="1357 247 12 11"><polygon points="1357.900,247.900 1368.100,247.900 1364.300,252.600 1364.300,257 1362,257 1362,252.600" fill="#f1fff1"/></svg><div class="b" style="left:303px;top:265px;width:1075px;height:20px;background:linear-gradient(#7a8eba,#7488b6);"></div><div class="t" style="top:269px;font-size:11px;line-height:13px;color:#e3e9f5;left:300.5px;width:80px;text-align:center;">Date</div><div class="t" style="top:269px;font-size:11px;line-height:13px;color:#e3e9f5;left:381.0px;width:90px;text-align:center;text-decoration:underline;">10:47am</div><div class="t" style="top:269px;font-size:11px;line-height:13px;color:#e3e9f5;left:478.0px;width:90px;text-align:center;">Currency</div><div class="t" style="top:269px;font-size:11px;line-height:13px;color:#e3e9f5;left:542.6px;width:90px;text-align:center;">Impact</div><div class="t" style="top:269px;font-size:11px;line-height:13px;color:#e3e9f5;left:999.0px;width:90px;text-align:center;">Detail</div><div class="t" style="top:269px;font-size:11px;line-height:13px;color:#e3e9f5;left:1075.0px;width:90px;text-align:center;">Actual</div><div class="t" style="top:269px;font-size:11px;line-height:13px;color:#e3e9f5;left:1161.0px;width:90px;text-align:center;">Forecast</div><div class="t" style="top:269px;font-size:11px;line-height:13px;color:#e3e9f5;left:1247.0px;width:90px;text-align:center;">Previous</div><div class="t" style="top:269px;font-size:11px;line-height:13px;color:#e3e9f5;left:1311.6px;width:90px;text-align:center;">Graph</div><div class="b" style="left:303px;top:285px;width:1075px;height:57px;background:#f4f6fa;"></div><div class="b" style="left:378px;top:285px;width:1.2px;height:57px;background:#fbfcfd;"></div><div class="t" style="top:294px;font-size:11px;line-height:13px;color:#141414;left:303.5px;width:74px;text-align:center;">Wed</div><div class="t" style="top:309px;font-size:11px;line-height:13px;color:#141414;left:303.5px;width:74px;text-align:center;">Apr 23</div><div class="t" style="top:294.2px;font-size:11px;line-height:13px;color:#141414;letter-spacing:0.15px;left:391.2px;width:80px;text-align:center;">3:45pm</div><svg style="left:401.300px;top:295.7px" width="8" height="9" viewBox="0 0 8 9"><polygon points="0.800,0.800 0.800,8.200 6.800,4.500" fill="#8fdf86" stroke="#3aa934" stroke-width="1.100"/></svg><svg style="left:475px;top:292.5px" width="10" height="14" viewBox="-5 -7 10 14"><g fill="none" stroke="#a9acb3" stroke-width="1.900" stroke-linecap="butt" transform="scale(1.0)"><path d="M-2.600,-4c2.100,2.400,2.100,5.600,0,8"/><path d="M1,-5.300c2.800,3.200,2.800,7.400,0,10.600"/></g></svg><div class="t" style="top:294.2px;font-size:11px;line-height:13px;color:#141414;left:493.5px;width:60px;text-align:center;">USD</div><svg style="left:580px;top:294.2px" width="14" height="12" viewBox="0 0 14 12"><path d="M0,12V2.800L4.600,0.300V2.600L9,0.300V2.600L14,0V12z" fill="#ea0b0e"/><path d="M0,12V11h14v1z" fill="#c40508"/></svg><div class="t" style="top:294.2px;font-size:11px;line-height:13px;color:#141414;letter-spacing:0.12px;left:637.6px;">Flash Manufacturing PMI</div><svg style="left:1037px;top:291.4px" width="17" height="14" viewBox="0 -3 17 14"><defs><linearGradient id="fg" x1="0" y1="0" x2="0" y2="1"><stop offset="0" stop-color="#fef7cc"/><stop offset="1" stop-color="#f6d05a"/></linearGradient></defs><path d="M6.300,-2.600h6.400l2.700,2.700v7.500h-9.100z" fill="#d6e6fb" stroke="#a9c4ea" stroke-width=".8"/><path d="M12.700,-2.600l2.700,2.700v7.500h-1.500" fill="none" stroke="#5584cc" stroke-width=".9"/><path d="M0.500,0.500h5l1,1.500h7v8.500h-13z" fill="#fbe596" stroke="#e3a94f" stroke-width=".8"/><path d="M0.500,10.500v-6.300h13v6.300z" fill="url(#fg)" stroke="#e3a94f" stroke-width=".8"/><path d="M2.400,3l2.600,-1.200" stroke="#f0902a" stroke-width=".9"/></svg><div class="t" style="top:294.2px;font-size:11px;line-height:13px;color:#141414;letter-spacing:0.05px;left:1166.0px;width:80px;text-align:center;">49.0</div><div class="t" style="top:294.2px;font-size:11px;line-height:13px;color:#2c9c1c;left:1248.3px;width:80px;text-align:center;">50.2</div><svg style="left:1302.1999999999998px;top:296.4px" width="7" height="8" viewBox="0 0 7 8"><polygon points="6.300,0.200 6.300,7.400 1.100,3.800" fill="#f2a21c"/></svg><svg style="left:475px;top:320.3px" width="10" height="14" viewBox="-5 -7 10 14"><g fill="none" stroke="#a9acb3" stroke-width="1.900" stroke-linecap="butt" transform="scale(1.0)"><path d="M-2.600,-4c2.100,2.400,2.100,5.600,0,8"/><path d="M1,-5.300c2.800,3.200,2.800,7.400,0,10.600"/></g></svg><div class="t" style="top:322.0px;font-size:11px;line-height:13px;color:#141414;left:493.5px;width:60px;text-align:center;">USD</div><svg style="left:580px;top:322.0px" width="14" height="12" viewBox="0 0 14 12"><path d="M0,12V2.800L4.600,0.300V2.600L9,0.300V2.600L14,0V12z" fill="#ea0b0e"/><path d="M0,12V11h14v1z" fill="#c40508"/></svg><div class="t" style="top:322.0px;font-size:11px;line-height:13px;color:#141414;letter-spacing:0.12px;left:637.6px;">Flash Services PMI</div><svg style="left:1037px;top:319.2px" width="17" height="14" viewBox="0 -3 17 14"><defs><linearGradient id="fg" x1="0" y1="0" x2="0" y2="1"><stop offset="0" stop-color="#fef7cc"/><stop offset="1" stop-color="#f6d05a"/></linearGradient></defs><path d="M6.300,-2.600h6.400l2.700,2.700v7.500h-9.100z" fill="#d6e6fb" stroke="#a9c4ea" stroke-width=".8"/><path d="M12.700,-2.600l2.700,2.700v7.500h-1.500" fill="none" stroke="#5584cc" stroke-width=".9"/><path d="M0.500,0.500h5l1,1.500h7v8.500h-13z" fill="#fbe596" stroke="#e3a94f" stroke-width=".8"/><path d="M0.500,10.500v-6.300h13v6.300z" fill="url(#fg)" stroke="#e3a94f" stroke-width=".8"/><path d="M2.400,3l2.600,-1.200" stroke="#f0902a" stroke-width=".9"/></svg><div class="t" style="top:322.0px;font-size:11px;line-height:13px;color:#141414;letter-spacing:0.05px;left:1166.0px;width:80px;text-align:center;">52.8</div><div class="t" style="top:322.0px;font-size:11px;line-height:13px;color:#111;left:1248.3px;width:80px;text-align:center;">54.4</div><svg style="left:1302.1999999999998px;top:324.2px" width="7" height="8" viewBox="0 0 7 8"><polygon points="6.300,0.200 6.300,7.400 1.100,3.800" fill="#f2a21c"/></svg><div class="b" style="left:303px;top:342px;width:1075px;height:43px;background:#e6e8ec;"></div><div class="b" style="left:378px;top:342px;width:1.2px;height:43px;background:#f1f2f5;"></div><div class="t" style="top:350px;font-size:11px;line-height:13px;color:#141414;left:303.5px;width:74px;text-align:center;">Thu</div><div class="t" style="top:364.7px;font-size:11px;line-height:13px;color:#141414;left:303.5px;width:74px;text-align:center;">Apr 24</div><div class="t" style="top:357.2px;font-size:11px;line-height:13px;color:#141414;letter-spacing:0.15px;left:387.5px;width:80px;text-align:center;">2:30pm</div><svg style="left:475px;top:355.5px" width="10" height="14" viewBox="-5 -7 10 14"><g fill="none" stroke="#a9acb3" stroke-width="1.900" stroke-linecap="butt" transform="scale(1.0)"><path d="M-2.600,-4c2.100,2.400,2.100,5.600,0,8"/><path d="M1,-5.300c2.800,3.200,2.800,7.400,0,10.600"/></g></svg><div class="t" style="top:357.2px;font-size:11px;line-height:13px;color:#141414;left:493.5px;width:60px;text-align:center;">USD</div><svg style="left:580px;top:357.2px" width="14" height="12" viewBox="0 0 14 12"><path d="M0,12V2.800L4.600,0.300V2.600L9,0.300V2.600L14,0V12z" fill="#ea0b0e"/><path d="M0,12V11h14v1z" fill="#c40508"/></svg><div class="t" style="top:357.2px;font-size:11px;line-height:13px;color:#141414;letter-spacing:0.12px;left:637.6px;">Unemployment Claims</div><svg style="left:1037px;top:354.7px" width="17" height="14" viewBox="0 -3 17 14"><defs><linearGradient id="fg" x1="0" y1="0" x2="0" y2="1"><stop offset="0" stop-color="#fef7cc"/><stop offset="1" stop-color="#f6d05a"/></linearGradient></defs><path d="M0.500,0.500h5l1,1.500h7v8.500h-13z" fill="#fbe596" stroke="#e5af57" stroke-width=".8"/><path d="M0.500,10.500v-6.500h13v6.500z" fill="url(#fg)" stroke="#e5af57" stroke-width=".8"/><path d="M2,2.600h3.200" stroke="#f7c766" stroke-width=".8"/></svg><div class="t" style="top:357.2px;font-size:11px;line-height:13px;color:#141414;letter-spacing:0.05px;left:1166.0px;width:80px;text-align:center;">222K</div><div class="t" style="top:357.2px;font-size:11px;line-height:13px;color:#111;letter-spacing:0.05px;left:1252.0px;width:80px;text-align:center;">215K</div><svg style="left:1349px;top:353.7px" width="17" height="14" viewBox="0 0 17 14"><rect x="0.500" y="5.500" width="4.800" height="8" fill="#ee6b68" stroke="#c93d3a" stroke-width=".8"/><rect x="5.800" y="0.500" width="5" height="13" fill="#5b96ec" stroke="#2f62c0" stroke-width=".8"/><rect x="11.300" y="7.500" width="4.700" height="6" fill="#73c56f" stroke="#3d8f3a" stroke-width=".8"/><rect x="0" y="13.200" width="16.500" height="1" fill="#39404d"/></svg><div class="b" style="left:303px;top:385px;width:1075px;height:56px;background:#f4f6fa;"></div><div class="b" style="left:378px;top:385px;width:1.2px;height:56px;background:#fbfcfd;"></div><div class="t" style="top:393px;font-size:11px;line-height:13px;color:#141414;left:303.5px;width:74px;text-align:center;">Fri</div><div class="t" style="top:408px;font-size:11px;line-height:13px;color:#141414;left:303.5px;width:74px;text-align:center;">Apr 25</div><div class="t" style="top:393.2px;font-size:11px;line-height:13px;color:#141414;letter-spacing:0.15px;left:387.5px;width:80px;text-align:center;">2:30pm</div><svg style="left:475px;top:391.5px" width="10" height="14" viewBox="-5 -7 10 14"><g fill="none" stroke="#a9acb3" stroke-width="1.900" stroke-linecap="butt" transform="scale(1.0)"><path d="M-2.600,-4c2.100,2.400,2.100,5.600,0,8"/><path d="M1,-5.300c2.800,3.200,2.800,7.400,0,10.600"/></g></svg><div class="t" style="top:393.2px;font-size:11px;line-height:13px;color:#141414;left:493.5px;width:60px;text-align:center;">CAD</div><svg style="left:580px;top:393.2px" width="14" height="12" viewBox="0 0 14 12"><path d="M0,12V2.800L4.600,0.300V2.600L9,0.300V2.600L14,0V12z" fill="#ea0b0e"/><path d="M0,12V11h14v1z" fill="#c40508"/></svg><div class="t" style="top:393.2px;font-size:11px;line-height:13px;color:#141414;letter-spacing:0.12px;left:637.6px;">Core Retail Sales m/m</div><svg style="left:1037px;top:390.4px" width="17" height="14" viewBox="0 -3 17 14"><defs><linearGradient id="fg" x1="0" y1="0" x2="0" y2="1"><stop offset="0" stop-color="#fef7cc"/><stop offset="1" stop-color="#f6d05a"/></linearGradient></defs><path d="M6.300,-2.600h6.400l2.700,2.700v7.500h-9.100z" fill="#d6e6fb" stroke="#a9c4ea" stroke-width=".8"/><path d="M12.700,-2.600l2.700,2.700v7.500h-1.500" fill="none" stroke="#5584cc" stroke-width=".9"/><path d="M0.500,0.500h5l1,1.500h7v8.500h-13z" fill="#fbe596" stroke="#e3a94f" stroke-width=".8"/><path d="M0.500,10.500v-6.300h13v6.300z" fill="url(#fg)" stroke="#e3a94f" stroke-width=".8"/><path d="M2.400,3l2.600,-1.200" stroke="#f0902a" stroke-width=".9"/></svg><div class="t" style="top:393.2px;font-size:11px;line-height:13px;color:#141414;letter-spacing:0.25px;left:1166.0px;width:80px;text-align:center;">-0.1%</div><div class="t" style="top:393.2px;font-size:11px;line-height:13px;color:#111;letter-spacing:0.25px;left:1252.0px;width:80px;text-align:center;">0.2%</div><svg style="left:1349px;top:389.7px" width="17" height="14" viewBox="0 0 17 14"><rect x="0.500" y="5.500" width="4.800" height="8" fill="#ee6b68" stroke="#c93d3a" stroke-width=".8"/><rect x="5.800" y="0.500" width="5" height="13" fill="#5b96ec" stroke="#2f62c0" stroke-width=".8"/><rect x="11.300" y="7.500" width="4.700" height="6" fill="#73c56f" stroke="#3d8f3a" stroke-width=".8"/><rect x="0" y="13.200" width="16.500" height="1" fill="#39404d"/></svg><svg style="left:475px;top:419.5px" width="10" height="14" viewBox="-5 -7 10 14"><g fill="none" stroke="#a9acb3" stroke-width="1.900" stroke-linecap="butt" transform="scale(1.0)"><path d="M-2.600,-4c2.100,2.400,2.100,5.600,0,8"/><path d="M1,-5.300c2.800,3.200,2.800,7.400,0,10.600"/></g></svg><div class="t" style="top:421.2px;font-size:11px;line-height:13px;color:#141414;left:493.5px;width:60px;text-align:center;">CAD</div><svg style="left:580px;top:421.2px" width="14" height="12" viewBox="0 0 14 12"><path d="M0,12V2.800L4.600,0.300V2.600L9,0.300V2.600L14,0V12z" fill="#ea0b0e"/><path d="M0,12V11h14v1z" fill="#c40508"/></svg><div class="t" style="top:421.2px;font-size:11px;line-height:13px;color:#141414;letter-spacing:0.12px;left:637.6px;">Retail Sales m/m</div><svg style="left:1037px;top:418.4px" width="17" height="14" viewBox="0 -3 17 14"><defs><linearGradient id="fg" x1="0" y1="0" x2="0" y2="1"><stop offset="0" stop-color="#fef7cc"/><stop offset="1" stop-color="#f6d05a"/></linearGradient></defs><path d="M6.300,-2.600h6.400l2.700,2.700v7.500h-9.100z" fill="#d6e6fb" stroke="#a9c4ea" stroke-width=".8"/><path d="M12.700,-2.600l2.700,2.700v7.500h-1.500" fill="none" stroke="#5584cc" stroke-width=".9"/><path d="M0.500,0.500h5l1,1.500h7v8.500h-13z" fill="#fbe596" stroke="#e3a94f" stroke-width=".8"/><path d="M0.500,10.500v-6.300h13v6.300z" fill="url(#fg)" stroke="#e3a94f" stroke-width=".8"/><path d="M2.400,3l2.600,-1.200" stroke="#f0902a" stroke-width=".9"/></svg><div class="t" style="top:421.2px;font-size:11px;line-height:13px;color:#141414;letter-spacing:0.25px;left:1166.0px;width:80px;text-align:center;">-0.4%</div><div class="t" style="top:421.2px;font-size:11px;line-height:13px;color:#111;letter-spacing:0.25px;left:1252.0px;width:80px;text-align:center;">-0.6%</div><svg style="left:1349px;top:417.7px" width="17" height="14" viewBox="0 0 17 14"><rect x="0.500" y="5.500" width="4.800" height="8" fill="#ee6b68" stroke="#c93d3a" stroke-width=".8"/><rect x="5.800" y="0.500" width="5" height="13" fill="#5b96ec" stroke="#2f62c0" stroke-width=".8"/><rect x="11.300" y="7.500" width="4.700" height="6" fill="#73c56f" stroke="#3d8f3a" stroke-width=".8"/><rect x="0" y="13.200" width="16.500" height="1" fill="#39404d"/></svg><div class="b" style="left:303px;top:441px;width:1075px;height:43px;background:#e6e8ec;"></div><div class="b" style="left:378px;top:441px;width:1.2px;height:43px;background:#f1f2f5;"></div><div class="t" style="top:449.2px;font-size:11px;line-height:13px;color:#141414;left:303.5px;width:74px;text-align:center;">Sat</div><div class="t" style="top:464px;font-size:11px;line-height:13px;color:#141414;left:303.5px;width:74px;text-align:center;">Apr 26</div><div class="b" style="left:303px;top:484px;width:1075px;height:43px;background:#f4f6fa;"></div><div class="b" style="left:378px;top:484px;width:1.2px;height:43px;background:#fbfcfd;"></div><div class="t" style="top:492px;font-size:11px;line-height:13px;color:#141414;left:303.5px;width:74px;text-align:center;">Sun</div><div class="t" style="top:506.79999999999995px;font-size:11px;line-height:13px;color:#141414;left:303.5px;width:74px;text-align:center;">Apr 27</div><div class="b" style="left:303px;top:527px;width:1075px;height:43px;background:#e6e8ec;"></div><div class="b" style="left:378px;top:527px;width:1.2px;height:43px;background:#f1f2f5;"></div><div class="t" style="top:534.8px;font-size:11px;line-height:13px;color:#141414;left:303.5px;width:74px;text-align:center;">Mon</div><div class="t" style="top:549.7px;font-size:11px;line-height:13px;color:#141414;left:303.5px;width:74px;text-align:center;">Apr 28</div><div class="b" style="left:303px;top:570px;width:1075px;height:42px;background:#f4f6fa;"></div><div class="b" style="left:378px;top:570px;width:1.2px;height:42px;background:#fbfcfd;"></div><div class="t" style="top:577px;font-size:11px;line-height:13px;color:#141414;left:303.5px;width:74px;text-align:center;">Tue</div><div class="t" style="top:591.8px;font-size:11px;line-height:13px;color:#141414;left:303.5px;width:74px;text-align:center;">Apr 29</div><div class="t" style="top:585.2px;font-size:11px;line-height:13px;color:#141414;letter-spacing:0.15px;left:387.5px;width:80px;text-align:center;">4:00pm</div><svg style="left:475px;top:583.5px" width="10" height="14" viewBox="-5 -7 10 14"><g fill="none" stroke="#a9acb3" stroke-width="1.900" stroke-linecap="butt" transform="scale(1.0)"><path d="M-2.600,-4c2.100,2.400,2.100,5.600,0,8"/><path d="M1,-5.300c2.800,3.200,2.800,7.400,0,10.600"/></g></svg><div class="t" style="top:585.2px;font-size:11px;line-height:13px;color:#141414;left:493.5px;width:60px;text-align:center;">USD</div><svg style="left:580px;top:585.2px" width="14" height="12" viewBox="0 0 14 12"><path d="M0,12V2.800L4.600,0.300V2.600L9,0.300V2.600L14,0V12z" fill="#ea0b0e"/><path d="M0,12V11h14v1z" fill="#c40508"/></svg><div class="t" style="top:585.2px;font-size:11px;line-height:13px;color:#141414;letter-spacing:0.33px;left:637.6px;">JOLTS Job Openings</div><svg style="left:1037px;top:582.7px" width="17" height="14" viewBox="0 -3 17 14"><defs><linearGradient id="fg" x1="0" y1="0" x2="0" y2="1"><stop offset="0" stop-color="#fef7cc"/><stop offset="1" stop-color="#f6d05a"/></linearGradient></defs><path d="M0.500,0.500h5l1,1.500h7v8.500h-13z" fill="#fbe596" stroke="#e5af57" stroke-width=".8"/><path d="M0.500,10.500v-6.500h13v6.500z" fill="url(#fg)" stroke="#e5af57" stroke-width=".8"/><path d="M2,2.600h3.200" stroke="#f7c766" stroke-width=".8"/></svg><div class="t" style="top:585.2px;font-size:11px;line-height:13px;color:#111;letter-spacing:0.05px;left:1252.0px;width:80px;text-align:center;">7.57M</div><svg style="left:1349px;top:581.7px" width="17" height="14" viewBox="0 0 17 14"><rect x="0.500" y="5.500" width="4.800" height="8" fill="#ee6b68" stroke="#c93d3a" stroke-width=".8"/><rect x="5.800" y="0.500" width="5" height="13" fill="#5b96ec" stroke="#2f62c0" stroke-width=".8"/><rect x="11.300" y="7.500" width="4.700" height="6" fill="#73c56f" stroke="#3d8f3a" stroke-width=".8"/><rect x="0" y="13.200" width="16.500" height="1" fill="#39404d"/></svg><div class="b" style="left:303px;top:612px;width:1075px;height:140px;background:#e6e8ec;"></div><div class="b" style="left:378px;top:612px;width:1.2px;height:140px;background:#f1f2f5;"></div><div class="t" style="top:620px;font-size:11px;line-height:13px;color:#141414;left:303.5px;width:74px;text-align:center;">Wed</div><div class="t" style="top:636px;font-size:11px;line-height:13px;color:#141414;left:303.5px;width:74px;text-align:center;">Apr 30</div><div class="t" style="top:620.2px;font-size:11px;line-height:13px;color:#141414;letter-spacing:0.15px;left:387.5px;width:80px;text-align:center;">2:15pm</div><svg style="left:475px;top:618.5px" width="10" height="14" viewBox="-5 -7 10 14"><g fill="none" stroke="#a9acb3" stroke-width="1.900" stroke-linecap="butt" transform="scale(1.0)"><path d="M-2.600,-4c2.100,2.400,2.100,5.600,0,8"/><path d="M1,-5.300c2.800,3.200,2.800,7.400,0,10.600"/></g></svg><div class="t" style="top:620.2px;font-size:11px;line-height:13px;color:#141414;left:493.5px;width:60px;text-align:center;">USD</div><svg style="left:580px;top:621.1px" width="14" height="12" viewBox="0 0 14 12"><path d="M0,12V2.800L4.600,0.300V2.600L9,0.300V2.600L14,0V12z" fill="#ea0b0e"/><path d="M0,12V11h14v1z" fill="#c40508"/></svg><div class="t" style="top:620.2px;font-size:11px;line-height:13px;color:#141414;letter-spacing:0.12px;left:637.6px;">ADP Non-Farm Employment Change</div><svg style="left:1037px;top:617.7px" width="17" height="14" viewBox="0 -3 17 14"><defs><linearGradient id="fg" x1="0" y1="0" x2="0" y2="1"><stop offset="0" stop-color="#fef7cc"/><stop offset="1" stop-color="#f6d05a"/></linearGradient></defs><path d="M0.500,0.500h5l1,1.500h7v8.500h-13z" fill="#fbe596" stroke="#e5af57" stroke-width=".8"/><path d="M0.500,10.500v-6.500h13v6.500z" fill="url(#fg)" stroke="#e5af57" stroke-width=".8"/><path d="M2,2.600h3.200" stroke="#f7c766" stroke-width=".8"/></svg><div class="t" style="top:620.2px;font-size:11px;line-height:13px;color:#111;letter-spacing:0.05px;left:1252.0px;width:80px;text-align:center;">155K</div><svg style="left:1349px;top:616.7px" width="17" height="14" viewBox="0 0 17 14"><rect x="0.500" y="5.500" width="4.800" height="8" fill="#ee6b68" stroke="#c93d3a" stroke-width=".8"/><rect x="5.800" y="0.500" width="5" height="13" fill="#5b96ec" stroke="#2f62c0" stroke-width=".8"/><rect x="11.300" y="7.500" width="4.700" height="6" fill="#73c56f" stroke="#3d8f3a" stroke-width=".8"/><rect x="0" y="13.200" width="16.500" height="1" fill="#39404d"/></svg><div class="b" style="left:379.2px;top:638.6px;width:998.8px;height:1px;background:#f3f4f7;"></div><div class="t" style="top:648.2px;font-size:11px;line-height:13px;color:#141414;letter-spacing:0.15px;left:387.5px;width:80px;text-align:center;">2:30pm</div><svg style="left:475px;top:646.5px" width="10" height="14" viewBox="-5 -7 10 14"><g fill="none" stroke="#a9acb3" stroke-width="1.900" stroke-linecap="butt" transform="scale(1.0)"><path d="M-2.600,-4c2.100,2.400,2.100,5.600,0,8"/><path d="M1,-5.300c2.800,3.200,2.800,7.400,0,10.600"/></g></svg><div class="t" style="top:648.2px;font-size:11px;line-height:13px;color:#141414;left:493.5px;width:60px;text-align:center;">CAD</div><svg style="left:580px;top:649.1px" width="14" height="12" viewBox="0 0 14 12"><path d="M0,12V2.800L4.600,0.300V2.600L9,0.300V2.600L14,0V12z" fill="#ea0b0e"/><path d="M0,12V11h14v1z" fill="#c40508"/></svg><div class="t" style="top:648.2px;font-size:11px;line-height:13px;color:#141414;letter-spacing:0.12px;left:637.6px;">GDP m/m</div><svg style="left:1037px;top:645.7px" width="17" height="14" viewBox="0 -3 17 14"><defs><linearGradient id="fg" x1="0" y1="0" x2="0" y2="1"><stop offset="0" stop-color="#fef7cc"/><stop offset="1" stop-color="#f6d05a"/></linearGradient></defs><path d="M0.500,0.500h5l1,1.500h7v8.500h-13z" fill="#fbe596" stroke="#e5af57" stroke-width=".8"/><path d="M0.500,10.500v-6.500h13v6.500z" fill="url(#fg)" stroke="#e5af57" stroke-width=".8"/><path d="M2,2.600h3.200" stroke="#f7c766" stroke-width=".8"/></svg><div class="t" style="top:648.2px;font-size:11px;line-height:13px;color:#111;letter-spacing:0.25px;left:1252.0px;width:80px;text-align:center;">0.4%</div><svg style="left:1349px;top:644.7px" width="17" height="14" viewBox="0 0 17 14"><rect x="0.500" y="5.500" width="4.800" height="8" fill="#ee6b68" stroke="#c93d3a" stroke-width=".8"/><rect x="5.800" y="0.500" width="5" height="13" fill="#5b96ec" stroke="#2f62c0" stroke-width=".8"/><rect x="11.300" y="7.500" width="4.700" height="6" fill="#73c56f" stroke="#3d8f3a" stroke-width=".8"/><rect x="0" y="13.200" width="16.500" height="1" fill="#39404d"/></svg><svg style="left:475px;top:674.5px" width="10" height="14" viewBox="-5 -7 10 14"><g fill="none" stroke="#a9acb3" stroke-width="1.900" stroke-linecap="butt" transform="scale(1.0)"><path d="M-2.600,-4c2.100,2.400,2.100,5.600,0,8"/><path d="M1,-5.300c2.800,3.200,2.800,7.400,0,10.600"/></g></svg><div class="t" style="top:676.2px;font-size:11px;line-height:13px;color:#141414;left:493.5px;width:60px;text-align:center;">USD</div><svg style="left:580px;top:677.1px" width="14" height="12" viewBox="0 0 14 12"><path d="M0,12V2.800L4.600,0.300V2.600L9,0.300V2.600L14,0V12z" fill="#ea0b0e"/><path d="M0,12V11h14v1z" fill="#c40508"/></svg><div class="t" style="top:676.2px;font-size:11px;line-height:13px;color:#141414;letter-spacing:0.12px;left:637.6px;">Advance GDP q/q</div><svg style="left:1037px;top:673.7px" width="17" height="14" viewBox="0 -3 17 14"><defs><linearGradient id="fg" x1="0" y1="0" x2="0" y2="1"><stop offset="0" stop-color="#fef7cc"/><stop offset="1" stop-color="#f6d05a"/></linearGradient></defs><path d="M0.500,0.500h5l1,1.500h7v8.500h-13z" fill="#fbe596" stroke="#e5af57" stroke-width=".8"/><path d="M0.500,10.500v-6.500h13v6.500z" fill="url(#fg)" stroke="#e5af57" stroke-width=".8"/><path d="M2,2.600h3.200" stroke="#f7c766" stroke-width=".8"/></svg><div class="t" style="top:676.2px;font-size:11px;line-height:13px;color:#2c9c1c;left:1248.3px;width:80px;text-align:center;">2.4%</div><svg style="left:1303.85px;top:678.4px" width="7" height="8" viewBox="0 0 7 8"><polygon points="6.300,0.200 6.300,7.400 1.100,3.800" fill="#f2a21c"/></svg><svg style="left:1349px;top:672.7px" width="17" height="14" viewBox="0 0 17 14"><rect x="0.500" y="5.500" width="4.800" height="8" fill="#ee6b68" stroke="#c93d3a" stroke-width=".8"/><rect x="5.800" y="0.500" width="5" height="13" fill="#5b96ec" stroke="#2f62c0" stroke-width=".8"/><rect x="11.300" y="7.500" width="4.700" height="6" fill="#73c56f" stroke="#3d8f3a" stroke-width=".8"/><rect x="0" y="13.200" width="16.500" height="1" fill="#39404d"/></svg><svg style="left:475px;top:702.5px" width="10" height="14" viewBox="-5 -7 10 14"><g fill="none" stroke="#a9acb3" stroke-width="1.900" stroke-linecap="butt" transform="scale(1.0)"><path d="M-2.600,-4c2.100,2.400,2.100,5.600,0,8"/><path d="M1,-5.300c2.800,3.200,2.800,7.400,0,10.600"/></g></svg><div class="t" style="top:704.2px;font-size:11px;line-height:13px;color:#141414;left:493.5px;width:60px;text-align:center;">USD</div><svg style="left:580px;top:705.1px" width="14" height="12" viewBox="0 0 14 12"><path d="M0,12V2.800L4.600,0.300V2.600L9,0.300V2.600L14,0V12z" fill="#ea0b0e"/><path d="M0,12V11h14v1z" fill="#c40508"/></svg><div class="t" style="top:704.2px;font-size:11px;line-height:13px;color:#141414;letter-spacing:0.12px;left:637.6px;">Employment Cost Index q/q</div><svg style="left:1037px;top:701.7px" width="17" height="14" viewBox="0 -3 17 14"><defs><linearGradient id="fg" x1="0" y1="0" x2="0" y2="1"><stop offset="0" stop-color="#fef7cc"/><stop offset="1" stop-color="#f6d05a"/></linearGradient></defs><path d="M0.500,0.500h5l1,1.500h7v8.500h-13z" fill="#fbe596" stroke="#e5af57" stroke-width=".8"/><path d="M0.500,10.500v-6.500h13v6.500z" fill="url(#fg)" stroke="#e5af57" stroke-width=".8"/><path d="M2,2.600h3.200" stroke="#f7c766" stroke-width=".8"/></svg><div class="t" style="top:704.2px;font-size:11px;line-height:13px;color:#111;letter-spacing:0.25px;left:1252.0px;width:80px;text-align:center;">0.9%</div><svg style="left:1349px;top:700.7px" width="17" height="14" viewBox="0 0 17 14"><rect x="0.500" y="5.500" width="4.800" height="8" fill="#ee6b68" stroke="#c93d3a" stroke-width=".8"/><rect x="5.800" y="0.500" width="5" height="13" fill="#5b96ec" stroke="#2f62c0" stroke-width=".8"/><rect x="11.300" y="7.500" width="4.700" height="6" fill="#73c56f" stroke="#3d8f3a" stroke-width=".8"/><rect x="0" y="13.200" width="16.500" height="1" fill="#39404d"/></svg><div class="b" style="left:379.2px;top:722.6px;width:998.8px;height:1px;background:#f3f4f7;"></div><div class="t" style="top:732.2px;font-size:11px;line-height:13px;color:#141414;letter-spacing:0.15px;left:387.5px;width:80px;text-align:center;">4:00pm</div><svg style="left:475px;top:730.5px" width="10" height="14" viewBox="-5 -7 10 14"><g fill="none" stroke="#a9acb3" stroke-width="1.900" stroke-linecap="butt" transform="scale(1.0)"><path d="M-2.600,-4c2.100,2.400,2.100,5.600,0,8"/><path d="M1,-5.300c2.800,3.200,2.800,7.400,0,10.600"/></g></svg><div class="t" style="top:732.2px;font-size:11px;line-height:13px;color:#141414;left:493.5px;width:60px;text-align:center;">USD</div><svg style="left:580px;top:733.1px" width="14" height="12" viewBox="0 0 14 12"><path d="M0,12V2.800L4.600,0.300V2.600L9,0.300V2.600L14,0V12z" fill="#ea0b0e"/><path d="M0,12V11h14v1z" fill="#c40508"/></svg><div class="t" style="top:732.2px;font-size:11px;line-height:13px;color:#141414;letter-spacing:0.12px;left:637.6px;">Core PCE Price Index m/m</div><svg style="left:1037px;top:729.7px" width="17" height="14" viewBox="0 -3 17 14"><defs><linearGradient id="fg" x1="0" y1="0" x2="0" y2="1"><stop offset="0" stop-color="#fef7cc"/><stop offset="1" stop-color="#f6d05a"/></linearGradient></defs><path d="M0.500,0.500h5l1,1.500h7v8.500h-13z" fill="#fbe596" stroke="#e5af57" stroke-width=".8"/><path d="M0.500,10.500v-6.500h13v6.500z" fill="url(#fg)" stroke="#e5af57" stroke-width=".8"/><path d="M2,2.600h3.200" stroke="#f7c766" stroke-width=".8"/></svg><div class="t" style="top:732.2px;font-size:11px;line-height:13px;color:#111;letter-spacing:0.25px;left:1252.0px;width:80px;text-align:center;">0.4%</div><svg style="left:1349px;top:728.7px" width="17" height="14" viewBox="0 0 17 14"><rect x="0.500" y="5.500" width="4.800" height="8" fill="#ee6b68" stroke="#c93d3a" stroke-width=".8"/><rect x="5.800" y="0.500" width="5" height="13" fill="#5b96ec" stroke="#2f62c0" stroke-width=".8"/><rect x="11.300" y="7.500" width="4.700" height="6" fill="#73c56f" stroke="#3d8f3a" stroke-width=".8"/><rect x="0" y="13.200" width="16.500" height="1" fill="#39404d"/></svg><div class="b" style="left:303px;top:752px;width:1075px;height:20px;background:#e9ebee;"></div><div class="b" style="left:303px;top:750.8px;width:1075px;height:1px;background:#f3f4f7;"></div><svg style="left:313px;top:758.300px" width="7.200" height="8.700" viewBox="0 0 7.200 8.700"><path d="M2.500,0h2.200v3.400h2.400l-3.500,3.400l-3.500-3.400h2.400z M0.100,7.600h7v1h-7z" fill="#4f7dbd"/></svg><div class="t" style="top:756px;font-size:11px;line-height:13px;color:#285a94;left:323px;">More</div><div class="b" style="left:303px;top:787px;width:530px;height:123px;background:#f4f6fa;box-shadow:0 1px 3px rgba(50,60,80,.5)"></div><div class="b" style="left:303px;top:787px;width:530px;height:23.5px;background:linear-gradient(#3b5894,#2f4a83);"></div><div class="t" style="top:793px;font-size:11px;line-height:13px;color:#eaf0fa;font-weight:bold;letter-spacing:0.2px;left:312px;">Forums / Last Replied</div><div class="b" style="left:848px;top:787px;width:530px;height:123px;background:#f4f6fa;box-shadow:0 1px 3px rgba(50,60,80,.5)"></div><div class="b" style="left:848px;top:787px;width:530px;height:23.5px;background:linear-gradient(#3b5894,#2f4a83);"></div><div class="t" style="top:793px;font-size:11px;line-height:13px;color:#eaf0fa;font-weight:bold;letter-spacing:0.2px;left:857.5px;">News / Latest Stories</div><div class="b" style="left:1349px;top:787px;width:29px;height:23.5px;background:linear-gradient(#4b6bab,#4464a2);"></div><svg style="left:1358.5px;top:792px" width="10" height="14" viewBox="-5 -7 10 14"><g fill="none" stroke="#dfe6f4" stroke-width="1.900" stroke-linecap="butt" transform="scale(1.0)"><path d="M-2.600,-4c2.100,2.400,2.100,5.600,0,8"/><path d="M1,-5.300c2.800,3.200,2.800,7.400,0,10.600"/></g></svg><svg style="left:313.4px;top:823.4px" width="12" height="13" viewBox="0 0 12 13"><g fill="#f2f3f5" stroke="#77797d" stroke-width="1"><rect x="0.500" y="0.500" width="11" height="3.800" rx="1"/><rect x="0.500" y="4.500" width="11" height="3.800" rx="1"/><rect x="0.500" y="8.500" width="11" height="3.800" rx="1"/></g></svg><div class="t" style="top:823px;font-size:11px;line-height:13px;color:#184c89;font-weight:bold;letter-spacing:0.05px;left:329.2px;text-decoration:underline;">Meditations on Extremistan - Nassim Taleb</div><svg style="left:313.300px;top:840.200px" width="16.800" height="16.800" viewBox="0 0 16.800 16.800"><rect width="16.800" height="16.800" fill="#7fae5c"/><path d="M9.500,0.300L16.800,1.200V16.800H7L6.600,12.200L3.200,10.600L1.200,7.200L3,3.400L6.200,1.200z" fill="#0d0f0b"/><path d="M2.200,5.600h12.800v2h-12.800z" fill="#dfe6dc" opacity=".8"/><path d="M8.500,10.400h6.500v2.400h-6.500z" fill="#5d6a58" opacity=".7"/></svg><svg style="left:331.500px;top:844px" width="8" height="10" viewBox="0 0 8 10"><polygon points="0.800,2.600 6.300,0.300 6.300,6 0.800,8.200" fill="#ee3a3c"/></svg><div class="t" style="top:843px;font-size:11px;line-height:13px;color:#8b8d91;left:343.5px;">leads</div><div class="t" style="top:843px;font-size:11px;line-height:13px;color:#a9abaf;left:380.6px;">|</div><div class="t" style="top:843px;font-size:11px;line-height:13px;color:#8b8d91;letter-spacing:0.1px;left:391.7px;text-decoration:underline;">Trading Discussion</div><div class="t" style="top:843px;font-size:11px;line-height:13px;color:#a9abaf;left:503.7px;">|</div><div class="t" style="top:843px;font-size:11px;line-height:13px;color:#8b8d91;left:515.4px;">431 replies</div><div class="t" style="top:862px;font-size:11px;line-height:13px;color:#8b8d91;letter-spacing:0.08px;left:312.2px;text-decoration:underline;">RoelsMajor replied 1 min ago</div><svg style="left:478.500px;top:866.500px" width="9" height="6" viewBox="0 0 9 6"><polygon points="0.300,0.300 8.300,0.300 4.300,5.400" fill="#43b649"/></svg><div class="t" style="top:862px;font-size:11px;line-height:13px;color:#111;left:495.5px;">Fire</div><div class="t" style="left:519.500px;top:860px;font-size:11px;line-height:15px;color:#111;font-family:'DejaVu Sans','Noto Sans CJK JP',sans-serif;letter-spacing:1.35px">▄︻デ══━一</div><svg style="left:591px;top:861px" width="15" height="14" viewBox="0 0 15 14"><polygon points="7.500,0 9.200,3.600 12.800,1 11.600,5 15,6 11.800,8 13.600,12 9.800,10.200 8.400,14 6.400,10.400 2.600,13 3.600,8.800 0,7.600 3.400,5.600 1.400,1.600 5.600,3.400" fill="#e8481c"/><polygon points="7.500,3 8.600,5.400 11,4 10.200,6.400 12.200,7 10,8.200 10.800,10.400 8.600,9.400 7.800,11.600 6.800,9.400 4.600,10.800 5.400,8.200 3.200,7.400 5.200,6.200 4.200,4 6.600,5.200" fill="#f9c53a"/><circle cx="7.600" cy="7.200" r="1.600" fill="#fff3b0"/></svg><div class="t" style="top:862px;font-size:11px;line-height:13px;color:#111;letter-spacing:0.21px;left:611.3px;">Range 2 EUR/USD Long, 1 unit 0.5%,</div><div class="b" style="left:796px;top:858px;width:37px;height:20px;background:linear-gradient(90deg,rgba(244,246,250,0),rgba(244,246,250,1) 85%);"></div><div class="b" style="left:303px;top:884px;width:530px;height:1px;background:#e3e5e9;"></div><svg style="left:313.4px;top:897px" width="12" height="13" viewBox="0 0 12 13"><g fill="#f2f3f5" stroke="#77797d" stroke-width="1"><rect x="0.500" y="0.500" width="11" height="3.800" rx="1"/><rect x="0.500" y="4.500" width="11" height="3.800" rx="1"/><rect x="0.500" y="8.500" width="11" height="3.800" rx="1"/></g></svg><div class="t" style="top:896.3px;font-size:11px;line-height:13px;color:#184c89;font-weight:bold;letter-spacing:0.12px;left:329.2px;text-decoration:underline;">The Swamp</div><svg style="left:858px;top:823px" width="12" height="13" viewBox="0 0 12 13"><rect x="0.600" y="0.600" width="10.800" height="11.600" rx="1.200" fill="#f3f4f6" stroke="#77797d" stroke-width="1.100"/><rect x="2.200" y="2.400" width="7.600" height="2.400" fill="#808286"/><g stroke="#8a8c90" stroke-width="1"><path d="M2.200,6.600h4.200M7.600,6.600h2.200M2.200,8.400h4.200M7.600,8.400h2.200M2.200,10.200h2M5.200,10.200h4.600"/></g></svg><div class="t" style="top:823px;font-size:11px;line-height:13px;color:#184c89;font-weight:bold;letter-spacing:0.03px;left:874.2px;text-decoration:underline;width:494.800px;overflow:hidden;">Renewed downturn in UK private sector output amid sharpest fall in new export orders</div><svg style="left:858px;top:840.9px" width="14" height="12" viewBox="0 0 14 12"><path d="M0.400,11.600V3L4.600,0.600V2.800L9,0.600V2.800L13.600,0.400V11.600z" fill="#f2d917" stroke="#cdb008" stroke-width=".8"/><path d="M0.400,11.400h13.200" stroke="#a8930a" stroke-width=".9"/></svg><div class="t" style="top:841px;font-size:11px;line-height:13px;color:#8b8d91;letter-spacing:0.15px;left:876.3px;text-decoration:underline;">From pmi.spglobal.com</div><div class="t" style="top:841px;font-size:11px;line-height:13px;color:#a9abaf;left:1015.5px;">|</div><div class="t" style="top:841px;font-size:11px;line-height:13px;color:#8b8d91;left:1027.6px;">14 min ago</div><div class="b" style="left:848px;top:859px;width:530px;height:1px;background:#e3e5e9;"></div><svg style="left:858px;top:872px" width="12" height="13" viewBox="0 0 12 13"><rect x="0.600" y="0.600" width="10.800" height="11.600" rx="1.200" fill="#f3f4f6" stroke="#77797d" stroke-width="1.100"/><rect x="2.200" y="2.400" width="7.600" height="2.400" fill="#808286"/><g stroke="#8a8c90" stroke-width="1"><path d="M2.200,6.600h4.200M7.600,6.600h2.200M2.200,8.400h4.200M7.600,8.400h2.200M2.200,10.200h2M5.200,10.200h4.600"/></g></svg><div class="t" style="top:872px;font-size:11px;line-height:13px;color:#184c89;font-weight:bold;letter-spacing:0.03px;left:874.2px;text-decoration:underline;width:494.800px;overflow:hidden;">EU business activity broadly unchanged as new orders fall at fastest pace in 2025</div><svg style="left:858px;top:889.9px" width="14" height="12" viewBox="0 0 14 12"><path d="M0.400,11.600V3L4.600,0.600V2.800L9,0.600V2.800L13.600,0.400V11.600z" fill="#f2d917" stroke="#cdb008" stroke-width=".8"/><path d="M0.400,11.400h13.200" stroke="#a8930a" stroke-width=".9"/></svg><div class="t" style="top:890px;font-size:11px;line-height:13px;color:#8b8d91;letter-spacing:0.15px;left:876.3px;text-decoration:underline;">From pmi.spglobal.com</div><div class="t" style="top:890px;font-size:11px;line-height:13px;color:#a9abaf;left:1015.5px;">|</div><div class="t" style="top:890px;font-size:11px;line-height:13px;color:#8b8d91;left:1027.6px;">45 min ago</div><div class="b" style="left:848px;top:908px;width:530px;height:1px;background:#e3e5e9;"></div><div class="b" style="left:1330px;top:822px;width:39px;height:16px;background:linear-gradient(90deg,rgba(244,246,250,0),rgba(244,246,250,1) 95%);"></div><div class="b" style="left:1330px;top:871px;width:39px;height:16px;background:linear-gradient(90deg,rgba(244,246,250,0),rgba(244,246,250,1) 95%);"></div><svg style="left:1396px;top:792px" width="84" height="74" viewBox="1396 792 84 74">
<defs>
<linearGradient id="wmG" gradientUnits="userSpaceOnUse" x1="1402" y1="850" x2="1460" y2="806"><stop offset="0" stop-color="#ee2418"/><stop offset=".3" stop-color="#f5651a"/><stop offset=".52" stop-color="#f7a81e"/><stop offset=".68" stop-color="#f1d626"/><stop offset=".84" stop-color="#9fe01a"/><stop offset="1" stop-color="#6fe21a"/></linearGradient>
<linearGradient id="wmD" x1="0" y1="0" x2="1" y2="1"><stop offset="0" stop-color="#26332f"/><stop offset="1" stop-color="#4d6860"/></linearGradient>
</defs>
<path d="M1410,815C1420,806,1445,799,1461,799.500C1467,799.700,1470,803,1469.500,808C1468,826,1458,847,1447,856.500C1444,859,1441,859,1438,857C1427,849,1415,835,1410,824C1408.500,821,1408.500,817.500,1410,815Z" fill="url(#wmD)" stroke="#f3f6f4" stroke-width="2.600"/>
<path d="M1399.500,836C1405,831,1415,828,1423,823.500C1430,820,1436,816,1440,813L1438.500,803.500C1440.500,806,1442.500,809.500,1443.500,812L1445.500,799C1447.500,803,1448.500,808,1448,812.500C1453,812,1459,814,1464,817.500C1463.500,821,1460,823,1456.500,823.500C1455,826,1453,828.500,1450.500,830.500C1454,833,1457.500,837,1460,841C1456,848,1451,854,1447,857C1444,859.500,1441,859.500,1438,857.500C1431,852.500,1424,846.500,1419,841.500C1413,843,1406,843,1401.500,840.500C1400,839,1399.200,837.500,1399.500,836Z" fill="url(#wmG)"/>
<path d="M1431,838C1437,836.500,1444,838.500,1449,842.500" fill="none" stroke="#3a4828" stroke-width="1.100" opacity=".6"/>
<path d="M1404,838.200c1.500,.6,3,.6,4.500,0" fill="none" stroke="#a81a10" stroke-width=".8" opacity=".7"/>
</svg><div class="t" style="top:862px;font-size:11px;line-height:13px;color:#f1f3f6;left:1395.0px;width:90px;text-align:center;font-family:'DejaVu Sans',sans-serif;direction:rtl;letter-spacing:0;">سنجش بروکر</div></body></html>
